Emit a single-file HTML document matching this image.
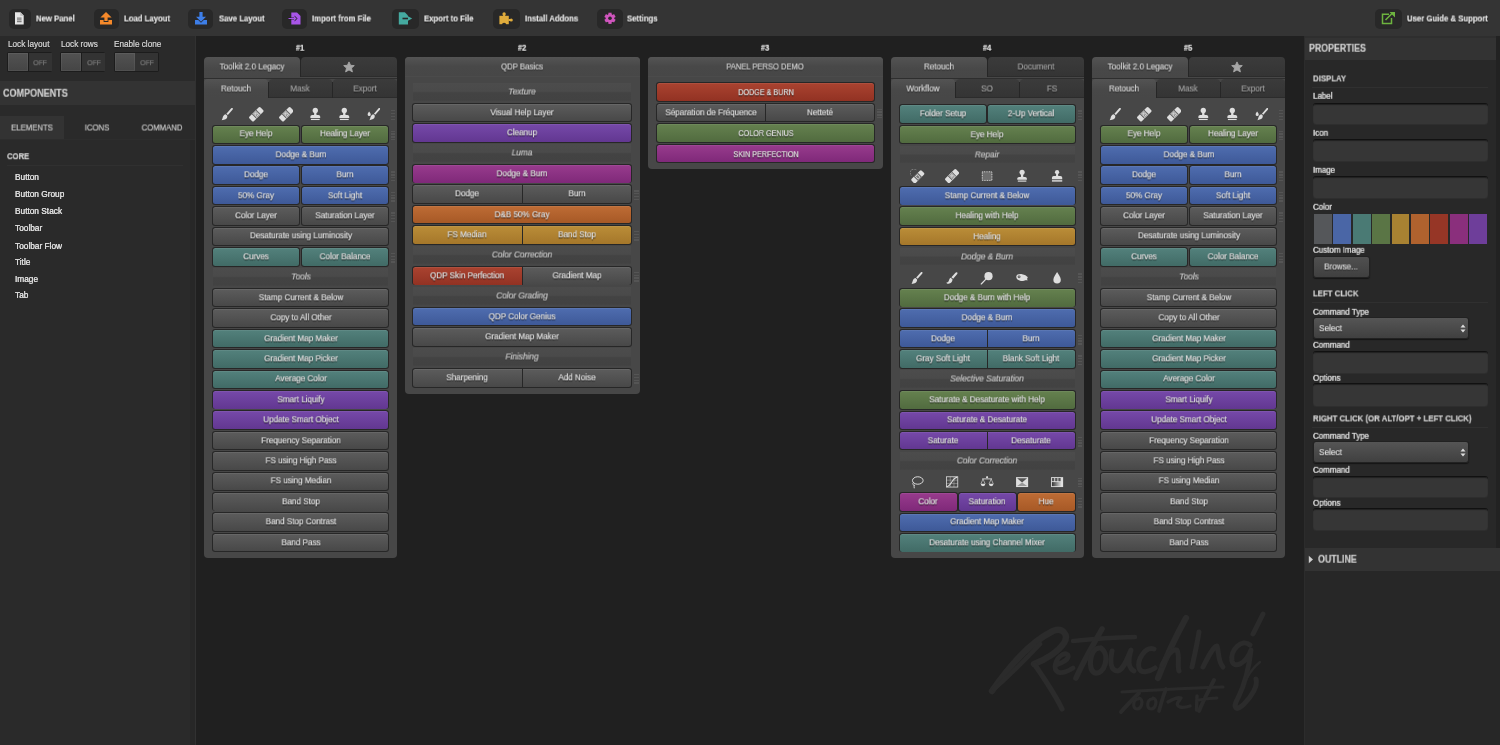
<!DOCTYPE html><html><head><meta charset="utf-8"><style>
*{margin:0;padding:0;box-sizing:border-box}
html,body{width:1500px;height:745px;overflow:hidden;background:#202020;font-family:"Liberation Sans", sans-serif}
.tx{position:absolute;white-space:nowrap;line-height:1;-webkit-text-stroke:0.2px currentColor;will-change:transform}
</style></head><body><div style="position:absolute;left:0px;top:0px;width:1500.00px;height:36.00px;background:#343434"></div>
<div style="position:absolute;left:8.5px;top:8.7px;width:22.00px;height:19.90px;background:#282828;border-radius:5px"></div>
<div class="tx" style="left:35.7px;top:18.6px;font-size:9px;font-weight:bold;color:#e4e4e4;text-shadow:0 1px 1px rgba(0,0,0,.6);transform:translateY(-50%) scaleX(0.86);transform-origin:0 50%;">New Panel</div>
<div style="position:absolute;left:93.5px;top:8.7px;width:25.10px;height:19.90px;background:#282828;border-radius:5px"></div>
<div class="tx" style="left:124px;top:18.6px;font-size:9px;font-weight:bold;color:#e4e4e4;text-shadow:0 1px 1px rgba(0,0,0,.6);transform:translateY(-50%) scaleX(0.86);transform-origin:0 50%;">Load Layout</div>
<div style="position:absolute;left:188.4px;top:8.7px;width:24.40px;height:19.90px;background:#282828;border-radius:5px"></div>
<div class="tx" style="left:218.6px;top:18.6px;font-size:9px;font-weight:bold;color:#e4e4e4;text-shadow:0 1px 1px rgba(0,0,0,.6);transform:translateY(-50%) scaleX(0.86);transform-origin:0 50%;">Save Layout</div>
<div style="position:absolute;left:282px;top:8.7px;width:25.00px;height:19.90px;background:#282828;border-radius:5px"></div>
<div class="tx" style="left:312.4px;top:18.6px;font-size:9px;font-weight:bold;color:#e4e4e4;text-shadow:0 1px 1px rgba(0,0,0,.6);transform:translateY(-50%) scaleX(0.86);transform-origin:0 50%;">Import from File</div>
<div style="position:absolute;left:392.4px;top:8.7px;width:26.60px;height:19.90px;background:#282828;border-radius:5px"></div>
<div class="tx" style="left:424px;top:18.6px;font-size:9px;font-weight:bold;color:#e4e4e4;text-shadow:0 1px 1px rgba(0,0,0,.6);transform:translateY(-50%) scaleX(0.86);transform-origin:0 50%;">Export to File</div>
<div style="position:absolute;left:493px;top:8.7px;width:26.50px;height:19.90px;background:#282828;border-radius:5px"></div>
<div class="tx" style="left:525px;top:18.6px;font-size:9px;font-weight:bold;color:#e4e4e4;text-shadow:0 1px 1px rgba(0,0,0,.6);transform:translateY(-50%) scaleX(0.86);transform-origin:0 50%;">Install Addons</div>
<div style="position:absolute;left:597.2px;top:8.7px;width:25.40px;height:19.90px;background:#282828;border-radius:5px"></div>
<div class="tx" style="left:627.4px;top:18.6px;font-size:9px;font-weight:bold;color:#e4e4e4;text-shadow:0 1px 1px rgba(0,0,0,.6);transform:translateY(-50%) scaleX(0.86);transform-origin:0 50%;">Settings</div>
<div style="position:absolute;left:1375.4px;top:8.7px;width:26.30px;height:19.90px;background:#282828;border-radius:5px"></div>
<div class="tx" style="left:1407px;top:18.6px;font-size:9px;font-weight:bold;color:#e4e4e4;text-shadow:0 1px 1px rgba(0,0,0,.6);transform:translateY(-50%) scaleX(0.86);transform-origin:0 50%;">User Guide &amp; Support</div>
<svg style="position:absolute;left:14px;top:12px;" width="11" height="13" viewBox="0 0 11 13"><path d="M1 0.3 H6.5 L9.7 3.5 V12.4 H1 Z" fill="#e6e6e6"/><path d="M6.3 0.3 V3.7 H9.7" fill="#bbb"/><rect x="3" y="5.6" width="4.6" height="1" fill="#666"/><rect x="3" y="7.4" width="4.6" height="1" fill="#666"/><rect x="3" y="9.2" width="4.6" height="1" fill="#666"/></svg>
<svg style="position:absolute;left:99px;top:11px;" width="14" height="14" viewBox="0 0 14 14"><path d="M7 1 L12.6 6.5 H8.6 V10 H5.4 V6.5 H1.4 Z" fill="#f5892a"/><path d="M1 9 H4.6 V11 H9.4 V9 H13 V13.5 H1 Z" fill="#f5892a"/></svg>
<svg style="position:absolute;left:194px;top:11px;" width="14" height="14" viewBox="0 0 14 14"><path d="M5.4 1 H8.6 V5.8 H12 L7 10.8 L2 5.8 H5.4 Z" fill="#3d7ee8"/><path d="M1 9 H4.2 L7 11.8 L9.8 9 H13 V13.5 H1 Z" fill="#3d7ee8"/></svg>
<svg style="position:absolute;left:288px;top:12px;" width="14" height="13" viewBox="0 0 14 13"><path d="M3.3 0.5 H9 L12.5 4 V12.5 H3.3 Z" fill="#a855e8"/><path d="M0.5 5.6 H6.5 V3.6 L9.6 6.5 L6.5 9.4 V7.4 H0.5 Z" fill="#1e1e1e" opacity="0.9"/><path d="M0.5 5.9 H6 V4.3 L8.6 6.5 L6 8.7 V7.1 H0.5 Z" fill="#a855e8"/></svg>
<svg style="position:absolute;left:398px;top:12px;" width="15" height="13" viewBox="0 0 15 13"><path d="M0.8 0.3 H6.8 L10 3.5 V12.5 H0.8 Z" fill="#45aaa0"/><rect x="4.5" y="5.7" width="6" height="1.6" fill="#282828"/><path d="M10 4.3 L14.2 6.5 L10 8.7 Z" fill="#45aaa0"/></svg>
<svg style="position:absolute;left:499px;top:12px;" width="15" height="13" viewBox="0 0 15 13"><rect x="0.4" y="3.8" width="9.4" height="8.4" fill="#e0ac3c"/><circle cx="5.1" cy="1.9" r="1.7" fill="#e0ac3c"/><rect x="4.1" y="2.5" width="2" height="2" fill="#e0ac3c"/><circle cx="12.2" cy="8" r="1.6" fill="#e0ac3c"/><rect x="9.5" y="7" width="2" height="2" fill="#e0ac3c"/><circle cx="5.1" cy="12.8" r="2.1" fill="#282828"/></svg>
<svg style="position:absolute;left:603.6px;top:12px;" width="12" height="13" viewBox="0 0 12 13"><g fill="#cf55bd" transform="translate(6,6.3)"><rect x="-1.6" y="-5.6" width="3.2" height="3.2" transform="rotate(0)"/><rect x="-1.6" y="-5.6" width="3.2" height="3.2" transform="rotate(60)"/><rect x="-1.6" y="-5.6" width="3.2" height="3.2" transform="rotate(120)"/><rect x="-1.6" y="-5.6" width="3.2" height="3.2" transform="rotate(180)"/><rect x="-1.6" y="-5.6" width="3.2" height="3.2" transform="rotate(240)"/><rect x="-1.6" y="-5.6" width="3.2" height="3.2" transform="rotate(300)"/><circle r="4.2"/></g><circle cx="6" cy="6.3" r="1.8" fill="#282828"/></svg>
<svg style="position:absolute;left:1381px;top:11px;" width="15" height="14" viewBox="0 0 15 14"><path d="M8 3.3 H1.5 V12.5 H10.5 V7" fill="none" stroke="#6db33f" stroke-width="1.5"/><path d="M4.5 9 L12 1.5" stroke="#6db33f" stroke-width="1.6"/><path d="M8.5 1 H14 V6.5 Z" fill="#6db33f"/></svg>
<div style="position:absolute;left:0px;top:36px;width:195.00px;height:709.00px;background:#2a2a2a"></div>
<div style="position:absolute;left:195px;top:36px;width:1.00px;height:709.00px;background:#313131"></div>
<div class="tx" style="left:7.5px;top:44.8px;font-size:8.2px;font-weight:normal;color:#d8d8d8;text-shadow:0 1px 1px rgba(0,0,0,.5);transform:translateY(-50%) scaleX(1.0);transform-origin:0 50%;">Lock layout</div>
<div style="position:absolute;left:7.2px;top:52px;width:45.00px;height:19.80px;background:#1c1c1c;border-radius:2px"></div>
<div style="position:absolute;left:8.1px;top:52.9px;width:20.20px;height:18.20px;background:linear-gradient(#525252,#454545);box-shadow:inset 0 0 0 1px rgba(255,255,255,.06)"></div>
<div style="position:absolute;left:28.5px;top:53px;width:23.30px;height:18.00px;background:#333"></div>
<div class="tx" style="left:40.3px;top:62.6px;font-size:7.6px;font-weight:normal;color:#7a7a7a;transform:translate(-50%,-50%) scaleX(0.9);">OFF</div>
<div class="tx" style="left:60.7px;top:44.8px;font-size:8.2px;font-weight:normal;color:#d8d8d8;text-shadow:0 1px 1px rgba(0,0,0,.5);transform:translateY(-50%) scaleX(1.0);transform-origin:0 50%;">Lock rows</div>
<div style="position:absolute;left:60.400000000000006px;top:52px;width:45.00px;height:19.80px;background:#1c1c1c;border-radius:2px"></div>
<div style="position:absolute;left:61.300000000000004px;top:52.9px;width:20.20px;height:18.20px;background:linear-gradient(#525252,#454545);box-shadow:inset 0 0 0 1px rgba(255,255,255,.06)"></div>
<div style="position:absolute;left:81.7px;top:53px;width:23.30px;height:18.00px;background:#333"></div>
<div class="tx" style="left:93.5px;top:62.6px;font-size:7.6px;font-weight:normal;color:#7a7a7a;transform:translate(-50%,-50%) scaleX(0.9);">OFF</div>
<div class="tx" style="left:114px;top:44.8px;font-size:8.2px;font-weight:normal;color:#d8d8d8;text-shadow:0 1px 1px rgba(0,0,0,.5);transform:translateY(-50%) scaleX(1.0);transform-origin:0 50%;">Enable clone</div>
<div style="position:absolute;left:113.7px;top:52px;width:45.00px;height:19.80px;background:#1c1c1c;border-radius:2px"></div>
<div style="position:absolute;left:114.6px;top:52.9px;width:20.20px;height:18.20px;background:linear-gradient(#525252,#454545);box-shadow:inset 0 0 0 1px rgba(255,255,255,.06)"></div>
<div style="position:absolute;left:135px;top:53px;width:23.30px;height:18.00px;background:#333"></div>
<div class="tx" style="left:146.8px;top:62.6px;font-size:7.6px;font-weight:normal;color:#7a7a7a;transform:translate(-50%,-50%) scaleX(0.9);">OFF</div>
<div style="position:absolute;left:0px;top:81px;width:195.00px;height:23.70px;background:#333"></div>
<div class="tx" style="left:3.3px;top:93px;font-size:10.5px;font-weight:bold;color:#cfcfcf;transform:translateY(-50%) scaleX(0.86);transform-origin:0 50%;">COMPONENTS</div>
<div style="position:absolute;left:0px;top:116px;width:64.00px;height:23.30px;background:#333"></div>
<div class="tx" style="left:32px;top:127.7px;font-size:9px;font-weight:normal;color:#c8c8c8;transform:translate(-50%,-50%) scaleX(0.86);">ELEMENTS</div>
<div class="tx" style="left:97px;top:127.7px;font-size:9px;font-weight:normal;color:#c8c8c8;transform:translate(-50%,-50%) scaleX(0.86);">ICONS</div>
<div class="tx" style="left:162.4px;top:127.7px;font-size:9px;font-weight:normal;color:#c8c8c8;transform:translate(-50%,-50%) scaleX(0.86);">COMMAND</div>
<div style="position:absolute;left:0px;top:139.3px;width:195.00px;height:1.00px;background:#2d2d2d"></div>
<div style="position:absolute;left:190px;top:140.3px;width:5.00px;height:604.70px;background:#272727"></div>
<div class="tx" style="left:7px;top:156.2px;font-size:9.6px;font-weight:bold;color:#d4d4d4;transform:translateY(-50%) scaleX(0.8);transform-origin:0 50%;">CORE</div>
<div style="position:absolute;left:7px;top:165px;width:176.00px;height:1.00px;background:#303030"></div>
<div class="tx" style="left:14.8px;top:177.4px;font-size:8.3px;font-weight:normal;color:#dcdcdc;text-shadow:0 0 0.4px #ddd;transform:translateY(-50%) scaleX(1.0);transform-origin:0 50%;">Button</div>
<div class="tx" style="left:14.8px;top:193.8px;font-size:8.3px;font-weight:normal;color:#dcdcdc;text-shadow:0 0 0.4px #ddd;transform:translateY(-50%) scaleX(1.0);transform-origin:0 50%;">Button Group</div>
<div class="tx" style="left:14.8px;top:211.1px;font-size:8.3px;font-weight:normal;color:#dcdcdc;text-shadow:0 0 0.4px #ddd;transform:translateY(-50%) scaleX(1.0);transform-origin:0 50%;">Button Stack</div>
<div class="tx" style="left:14.8px;top:228.2px;font-size:8.3px;font-weight:normal;color:#dcdcdc;text-shadow:0 0 0.4px #ddd;transform:translateY(-50%) scaleX(1.0);transform-origin:0 50%;">Toolbar</div>
<div class="tx" style="left:14.8px;top:245.6px;font-size:8.3px;font-weight:normal;color:#dcdcdc;text-shadow:0 0 0.4px #ddd;transform:translateY(-50%) scaleX(1.0);transform-origin:0 50%;">Toolbar Flow</div>
<div class="tx" style="left:14.8px;top:261.9px;font-size:8.3px;font-weight:normal;color:#dcdcdc;text-shadow:0 0 0.4px #ddd;transform:translateY(-50%) scaleX(1.0);transform-origin:0 50%;">Title</div>
<div class="tx" style="left:14.8px;top:278.7px;font-size:8.3px;font-weight:normal;color:#dcdcdc;text-shadow:0 0 0.4px #ddd;transform:translateY(-50%) scaleX(1.0);transform-origin:0 50%;">Image</div>
<div class="tx" style="left:14.8px;top:295px;font-size:8.3px;font-weight:normal;color:#dcdcdc;text-shadow:0 0 0.4px #ddd;transform:translateY(-50%) scaleX(1.0);transform-origin:0 50%;">Tab</div>
<div style="position:absolute;left:1304px;top:36px;width:196.00px;height:709.00px;background:#282828"></div>
<div style="position:absolute;left:1304px;top:36px;width:1.30px;height:709.00px;background:#2c2c2c"></div>
<div style="position:absolute;left:1305.3px;top:36px;width:190.70px;height:23.60px;background:#333"></div>
<div style="position:absolute;left:1305.3px;top:36px;width:190.70px;height:1.60px;background:#2e2e2e"></div>
<div class="tx" style="left:1309.0px;top:48px;font-size:10.5px;font-weight:bold;color:#cdcdcd;transform:translateY(-50%) scaleX(0.84);transform-origin:0 50%;">PROPERTIES</div>
<div style="position:absolute;left:1496px;top:36px;width:4.00px;height:511.60px;background:#222"></div>
<div class="tx" style="left:1312.7px;top:79.30000000000001px;font-size:9.2px;font-weight:bold;color:#d0d0d0;transform:translateY(-50%) scaleX(0.85);transform-origin:0 50%;">DISPLAY</div>
<div style="position:absolute;left:1312px;top:87px;width:176.00px;height:1.00px;background:#303030"></div>
<div class="tx" style="left:1312.8px;top:96.4px;font-size:8.4px;font-weight:normal;color:#d8d8d8;text-shadow:0 0 0.4px #ccc;transform:translateY(-50%) scaleX(0.95);transform-origin:0 50%;">Label</div>
<div style="position:absolute;left:1312.5px;top:102.5px;width:175.10px;height:21.50px;background:#363636;border-radius:3px;border-top:1px solid #111;box-shadow:inset 0 1px 1px rgba(0,0,0,.4), 0 1px 0 #2e2e2e"></div>
<div class="tx" style="left:1312.8px;top:133.2px;font-size:8.4px;font-weight:normal;color:#d8d8d8;text-shadow:0 0 0.4px #ccc;transform:translateY(-50%) scaleX(0.95);transform-origin:0 50%;">Icon</div>
<div style="position:absolute;left:1312.5px;top:139.3px;width:175.10px;height:21.50px;background:#363636;border-radius:3px;border-top:1px solid #111;box-shadow:inset 0 1px 1px rgba(0,0,0,.4), 0 1px 0 #2e2e2e"></div>
<div class="tx" style="left:1312.8px;top:170px;font-size:8.4px;font-weight:normal;color:#d8d8d8;text-shadow:0 0 0.4px #ccc;transform:translateY(-50%) scaleX(0.95);transform-origin:0 50%;">Image</div>
<div style="position:absolute;left:1312.5px;top:175.5px;width:175.10px;height:22.00px;background:#363636;border-radius:3px;border-top:1px solid #111;box-shadow:inset 0 1px 1px rgba(0,0,0,.4), 0 1px 0 #2e2e2e"></div>
<div class="tx" style="left:1312.8px;top:207px;font-size:8.4px;font-weight:normal;color:#d8d8d8;text-shadow:0 0 0.4px #ccc;transform:translateY(-50%) scaleX(0.95);transform-origin:0 50%;">Color</div>
<div style="position:absolute;left:1314.0px;top:214.1px;width:17.80px;height:29.60px;background:#55575a"></div>
<div style="position:absolute;left:1333.4px;top:214.1px;width:17.80px;height:29.60px;background:#4a66a6"></div>
<div style="position:absolute;left:1352.8px;top:214.1px;width:17.80px;height:29.60px;background:#4a7a74"></div>
<div style="position:absolute;left:1372.2px;top:214.1px;width:17.80px;height:29.60px;background:#5a7545"></div>
<div style="position:absolute;left:1391.6px;top:214.1px;width:17.80px;height:29.60px;background:#a88232"></div>
<div style="position:absolute;left:1411.0px;top:214.1px;width:17.80px;height:29.60px;background:#b0622e"></div>
<div style="position:absolute;left:1430.4px;top:214.1px;width:17.80px;height:29.60px;background:#963626"></div>
<div style="position:absolute;left:1449.8px;top:214.1px;width:17.80px;height:29.60px;background:#8a2f7c"></div>
<div style="position:absolute;left:1469.2px;top:214.1px;width:17.80px;height:29.60px;background:#6e3e9a"></div>
<div class="tx" style="left:1312.8px;top:250.4px;font-size:8.4px;font-weight:normal;color:#d8d8d8;text-shadow:0 0 0.4px #ccc;transform:translateY(-50%) scaleX(0.95);transform-origin:0 50%;">Custom Image</div>
<div style="position:absolute;left:1313px;top:256.4px;width:56.50px;height:21.60px;background:linear-gradient(#505050,#404040);border-radius:3px;border:1px solid #222;box-shadow:0 1px 1px rgba(0,0,0,.5)"></div>
<div class="tx" style="left:1341.2px;top:267.2px;font-size:9px;font-weight:normal;color:#dcdcdc;text-shadow:0 1px 1px rgba(0,0,0,.6);transform:translate(-50%,-50%) scaleX(0.9);">Browse...</div>
<div class="tx" style="left:1312.7px;top:294.2px;font-size:9.2px;font-weight:bold;color:#d0d0d0;transform:translateY(-50%) scaleX(0.85);transform-origin:0 50%;">LEFT CLICK</div>
<div style="position:absolute;left:1312px;top:302.4px;width:176.00px;height:1.00px;background:#303030"></div>
<div class="tx" style="left:1312.8px;top:311.6px;font-size:8.4px;font-weight:normal;color:#d8d8d8;text-shadow:0 0 0.4px #ccc;transform:translateY(-50%) scaleX(0.95);transform-origin:0 50%;">Command Type</div>
<div style="position:absolute;left:1313px;top:317.09999999999997px;width:155.80px;height:21.90px;background:linear-gradient(#555,#404040);border-radius:3px;border:1px solid #222;box-shadow:0 1px 1px rgba(0,0,0,.5)"></div>
<div class="tx" style="left:1319.3px;top:328.15px;font-size:9.6px;font-weight:normal;color:#e0e0e0;text-shadow:0 1px 1px rgba(0,0,0,.6);transform:translateY(-50%) scaleX(0.86);transform-origin:0 50%;">Select</div>
<svg style="position:absolute;left:1460px;top:323.95px;" width="6" height="9" viewBox="0 0 6 9"><path d="M3 0.5 L5.5 3.6 H0.5 Z M3 8.5 L5.5 5.4 H0.5 Z" fill="#ddd"/></svg>
<div class="tx" style="left:1312.8px;top:345px;font-size:8.4px;font-weight:normal;color:#d8d8d8;text-shadow:0 0 0.4px #ccc;transform:translateY(-50%) scaleX(0.95);transform-origin:0 50%;">Command</div>
<div style="position:absolute;left:1312.5px;top:350.7px;width:175.10px;height:22.20px;background:#363636;border-radius:3px;border-top:1px solid #111;box-shadow:inset 0 1px 1px rgba(0,0,0,.4), 0 1px 0 #2e2e2e"></div>
<div class="tx" style="left:1312.8px;top:378.3px;font-size:8.4px;font-weight:normal;color:#d8d8d8;text-shadow:0 0 0.4px #ccc;transform:translateY(-50%) scaleX(0.95);transform-origin:0 50%;">Options</div>
<div style="position:absolute;left:1312.5px;top:383.3px;width:175.10px;height:22.60px;background:#363636;border-radius:3px;border-top:1px solid #111;box-shadow:inset 0 1px 1px rgba(0,0,0,.4), 0 1px 0 #2e2e2e"></div>
<div class="tx" style="left:1312.7px;top:418.5px;font-size:9.2px;font-weight:bold;color:#d0d0d0;transform:translateY(-50%) scaleX(0.85);transform-origin:0 50%;">RIGHT CLICK (OR ALT/OPT + LEFT CLICK)</div>
<div style="position:absolute;left:1312px;top:426.6px;width:176.00px;height:1.00px;background:#303030"></div>
<div class="tx" style="left:1312.8px;top:436px;font-size:8.4px;font-weight:normal;color:#d8d8d8;text-shadow:0 0 0.4px #ccc;transform:translateY(-50%) scaleX(0.95);transform-origin:0 50%;">Command Type</div>
<div style="position:absolute;left:1313px;top:441.3px;width:155.80px;height:22.00px;background:linear-gradient(#555,#404040);border-radius:3px;border:1px solid #222;box-shadow:0 1px 1px rgba(0,0,0,.5)"></div>
<div class="tx" style="left:1319.3px;top:452.40000000000003px;font-size:9.6px;font-weight:normal;color:#e0e0e0;text-shadow:0 1px 1px rgba(0,0,0,.6);transform:translateY(-50%) scaleX(0.86);transform-origin:0 50%;">Select</div>
<svg style="position:absolute;left:1460px;top:448.20000000000005px;" width="6" height="9" viewBox="0 0 6 9"><path d="M3 0.5 L5.5 3.6 H0.5 Z M3 8.5 L5.5 5.4 H0.5 Z" fill="#ddd"/></svg>
<div class="tx" style="left:1312.8px;top:469.7px;font-size:8.4px;font-weight:normal;color:#d8d8d8;text-shadow:0 0 0.4px #ccc;transform:translateY(-50%) scaleX(0.95);transform-origin:0 50%;">Command</div>
<div style="position:absolute;left:1312.5px;top:475.7px;width:175.10px;height:21.50px;background:#363636;border-radius:3px;border-top:1px solid #111;box-shadow:inset 0 1px 1px rgba(0,0,0,.4), 0 1px 0 #2e2e2e"></div>
<div class="tx" style="left:1312.8px;top:502.9px;font-size:8.4px;font-weight:normal;color:#d8d8d8;text-shadow:0 0 0.4px #ccc;transform:translateY(-50%) scaleX(0.95);transform-origin:0 50%;">Options</div>
<div style="position:absolute;left:1312.5px;top:508.3px;width:175.10px;height:22.20px;background:#363636;border-radius:3px;border-top:1px solid #111;box-shadow:inset 0 1px 1px rgba(0,0,0,.4), 0 1px 0 #2e2e2e"></div>
<div style="position:absolute;left:1305px;top:547.6px;width:195.00px;height:23.10px;background:#333"></div>
<svg style="position:absolute;left:1307.5px;top:555px;" width="6" height="9" viewBox="0 0 6 9"><path d="M0.8 0.8 L5 4.5 L0.8 8.2 Z" fill="#cfcfcf"/></svg>
<div class="tx" style="left:1317.6px;top:559.2px;font-size:10.5px;font-weight:bold;color:#cdcdcd;transform:translateY(-50%) scaleX(0.84);transform-origin:0 50%;">OUTLINE</div>
<div style="position:absolute;left:1305px;top:570.7px;width:195.00px;height:174.30px;background:#272727"></div>
<div style="position:absolute;left:196px;top:36px;width:1108.00px;height:709.00px;background:#202020"></div>
<div class="tx" style="left:299.90000000000003px;top:48px;font-size:8.5px;font-weight:bold;color:#e4e4e4;text-shadow:0 1px 1px rgba(0,0,0,.5);transform:translate(-50%,-50%) scaleX(0.88);">#1</div>
<div style="position:absolute;left:204px;top:66px;width:192.60px;height:491.70px;background:#474747;border-radius:4px"></div>
<div style="position:absolute;left:204px;top:76.5px;width:192.60px;height:2.00px;background:#474747"></div>
<div style="position:absolute;left:207px;top:60px;width:186.60px;height:16.80px;background:#262626"></div>
<div style="position:absolute;left:204.0px;top:57px;width:95.80px;height:19.80px;background:linear-gradient(#535353,#484848 60%,#474747);border-radius:4px 4px 0 0"></div>
<div class="tx" style="left:251.9px;top:67.0px;font-size:9px;font-weight:normal;color:#d8d8d8;text-shadow:0 1px 1px rgba(0,0,0,.6);transform:translate(-50%,-50%) scaleX(0.9);">Toolkit 2.0 Legacy</div>
<div style="position:absolute;left:300.8px;top:57px;width:95.80px;height:19.80px;background:linear-gradient(#3b3b3b,#343434);border-radius:4px 4px 0 0;box-shadow:inset 0 -1px 0 #2c2c2c"></div>
<svg style="position:absolute;left:342.70000000000005px;top:60.900000000000006px;" width="12" height="12" viewBox="0 0 12 12"><path d="M6 0.9 L7.6 4.3 L11.3 4.6 L8.5 7.1 L9.4 10.9 L6 8.9 L2.6 10.9 L3.5 7.1 L0.7 4.6 L4.4 4.3 Z" fill="#a6a6a6" stroke="#a6a6a6" stroke-width="0.9" stroke-linejoin="round"/></svg>
<div style="position:absolute;left:204px;top:77.9px;width:192.60px;height:0.70px;background:#2e2e2e"></div>
<div style="position:absolute;left:207px;top:81.6px;width:186.60px;height:16.90px;background:#262626"></div>
<div style="position:absolute;left:204.0px;top:78.6px;width:63.70px;height:19.90px;background:linear-gradient(#535353,#484848 60%,#474747);border-radius:4px 4px 0 0"></div>
<div class="tx" style="left:235.85px;top:88.64999999999999px;font-size:9px;font-weight:normal;color:#d8d8d8;text-shadow:0 1px 1px rgba(0,0,0,.6);transform:translate(-50%,-50%) scaleX(0.9);">Retouch</div>
<div style="position:absolute;left:268.7px;top:78.6px;width:63.20px;height:19.90px;background:linear-gradient(#3b3b3b,#343434);border-radius:4px 4px 0 0;box-shadow:inset 0 -1px 0 #2c2c2c"></div>
<div class="tx" style="left:300.29999999999995px;top:88.64999999999999px;font-size:9px;font-weight:normal;color:#a0a0a0;text-shadow:0 1px 1px rgba(0,0,0,.6);transform:translate(-50%,-50%) scaleX(0.9);">Mask</div>
<div style="position:absolute;left:332.9px;top:78.6px;width:63.70px;height:19.90px;background:linear-gradient(#3b3b3b,#343434);border-radius:4px 4px 0 0;box-shadow:inset 0 -1px 0 #2c2c2c"></div>
<div class="tx" style="left:364.75px;top:88.64999999999999px;font-size:9px;font-weight:normal;color:#a0a0a0;text-shadow:0 1px 1px rgba(0,0,0,.6);transform:translate(-50%,-50%) scaleX(0.9);">Export</div>
<svg style="position:absolute;left:220.0333333333333px;top:107.2px;" width="14.6" height="14.6" viewBox="0 0 16 16"><path d="M13.6 1.2 C14.3 1.6 14.2 2.4 13.7 3 L8.6 8.8 L7.0 7.4 L12.3 1.5 C12.7 1.1 13.2 1.0 13.6 1.2 Z" fill="#dedede"/><path d="M6.3 8.0 L8.0 9.5 C8.3 11.6 6.9 13.6 4.4 14.0 L1.8 14.6 C2.8 13.2 2.8 11.6 3.6 10.0 C4.2 8.9 5.2 8.2 6.3 8.0 Z" fill="#dedede"/></svg>
<svg style="position:absolute;left:249.3px;top:107.2px;" width="14.6" height="14.6" viewBox="0 0 16 16"><g transform="rotate(-45 8 8)"><rect x="-0.6" y="4.5" width="17.2" height="7" rx="1.6" fill="#dedede"/><rect x="4.6" y="4.5" width="0.7" height="7" fill="#474747"/><rect x="10.7" y="4.5" width="0.7" height="7" fill="#474747"/><rect x="5.9" y="5.5" width="4.2" height="5" fill="none" stroke="#5e5e5e" stroke-width="0.6"/><circle cx="7.1" cy="6.9" r="0.45" fill="#555"/><circle cx="8.9" cy="6.9" r="0.45" fill="#555"/><circle cx="7.1" cy="9.1" r="0.45" fill="#555"/><circle cx="8.9" cy="9.1" r="0.45" fill="#555"/><circle cx="8" cy="8" r="0.45" fill="#555"/></g></svg>
<svg style="position:absolute;left:278.56666666666666px;top:107.2px;" width="14.6" height="14.6" viewBox="0 0 16 16"><g transform="rotate(-45 8 8)"><rect x="-0.6" y="4.5" width="17.2" height="7" rx="1.6" fill="#dedede"/><rect x="4.6" y="4.5" width="0.7" height="7" fill="#474747"/><rect x="10.7" y="4.5" width="0.7" height="7" fill="#474747"/><rect x="5.9" y="5.5" width="4.2" height="5" fill="none" stroke="#5e5e5e" stroke-width="0.6"/><circle cx="7.1" cy="6.9" r="0.45" fill="#555"/><circle cx="8.9" cy="6.9" r="0.45" fill="#555"/><circle cx="7.1" cy="9.1" r="0.45" fill="#555"/><circle cx="8.9" cy="9.1" r="0.45" fill="#555"/><circle cx="8" cy="8" r="0.45" fill="#555"/></g></svg>
<svg style="position:absolute;left:307.8333333333333px;top:107.2px;" width="14.6" height="14.6" viewBox="0 0 16 16"><circle cx="8" cy="3.8" r="2.9" fill="#dedede"/><path d="M6.9 5.5 H9.1 L9.4 9.0 H6.6 Z" fill="#dedede"/><path d="M2.6 10.6 Q2.6 8.9 4.6 8.9 H11.4 Q13.4 8.9 13.4 10.6 V12 H2.6 Z" fill="#dedede"/><rect x="3.2" y="13" width="9.6" height="1.3" fill="#dedede"/></svg>
<svg style="position:absolute;left:337.09999999999997px;top:107.2px;" width="14.6" height="14.6" viewBox="0 0 16 16"><circle cx="8" cy="3.8" r="2.9" fill="#dedede"/><path d="M6.9 5.5 H9.1 L9.4 9.0 H6.6 Z" fill="#dedede"/><path d="M2.6 10.6 Q2.6 8.9 4.6 8.9 H11.4 Q13.4 8.9 13.4 10.6 V12 H2.6 Z" fill="#dedede"/><rect x="3.2" y="13" width="9.6" height="1.3" fill="#dedede"/></svg>
<svg style="position:absolute;left:366.3666666666666px;top:107.2px;" width="14.6" height="14.6" viewBox="0 0 16 16"><path d="M3.4 5.0 C2.6 6.2 1.8 7.2 1.8 8.2 A1.7 1.7 0 0 0 5.2 8.2 C5.2 7.2 4.2 6.2 3.4 5.0 Z" fill="#dedede"/><path d="M15.0 1.2 C15.6 1.6 15.5 2.3 15.1 2.9 L10.2 8.6 L8.7 7.3 L13.8 1.5 C14.2 1.1 14.6 1.0 15.0 1.2 Z" fill="#dedede"/><path d="M8.0 7.9 L9.6 9.3 C9.9 11.4 8.6 13.4 6.2 13.8 L3.8 14.4 C4.7 13.0 4.7 11.5 5.5 10.0 C6.0 8.9 7.0 8.2 8.0 7.9 Z" fill="#dedede"/></svg>
<div style="position:absolute;left:390.6px;top:110.1px;width:4.50px;height:1.40px;background:#555"></div>
<div style="position:absolute;left:390.6px;top:112.89999999999999px;width:4.50px;height:1.40px;background:#555"></div>
<div style="position:absolute;left:390.6px;top:115.69999999999999px;width:4.50px;height:1.40px;background:#555"></div>
<div style="position:absolute;left:390.6px;top:118.5px;width:4.50px;height:1.40px;background:#555"></div>
<div style="position:absolute;left:211.7px;top:124.66px;width:88.80px;height:19.45px;background:#272727;border-radius:3.2px"></div>
<div style="position:absolute;left:212.7px;top:125.66px;width:86.80px;height:17.55px;background:linear-gradient(#65814f,#516b3f);border-radius:2.5px 2.5px 2.5px 2.5px;box-shadow:inset 0 1px 0 rgba(255,255,255,.07)"></div>
<div class="tx" style="left:256.1px;top:134.435px;font-size:9.3px;font-weight:normal;color:#e2e2e2;text-shadow:0 1px 1px rgba(0,0,0,.85);transform:translate(-50%,-50%) scaleX(0.87);">Eye Help</div>
<div style="position:absolute;left:300.5px;top:124.66px;width:88.80px;height:19.45px;background:#272727;border-radius:3.2px"></div>
<div style="position:absolute;left:301.5px;top:125.66px;width:86.80px;height:17.55px;background:linear-gradient(#65814f,#516b3f);border-radius:2.5px 2.5px 2.5px 2.5px;box-shadow:inset 0 1px 0 rgba(255,255,255,.07)"></div>
<div class="tx" style="left:344.9px;top:134.435px;font-size:9.3px;font-weight:normal;color:#e2e2e2;text-shadow:0 1px 1px rgba(0,0,0,.85);transform:translate(-50%,-50%) scaleX(0.87);">Healing Layer</div>
<div style="position:absolute;left:390.6px;top:130.51px;width:4.50px;height:1.40px;background:#555"></div>
<div style="position:absolute;left:390.6px;top:133.31px;width:4.50px;height:1.40px;background:#555"></div>
<div style="position:absolute;left:390.6px;top:136.10999999999999px;width:4.50px;height:1.40px;background:#555"></div>
<div style="position:absolute;left:390.6px;top:138.91px;width:4.50px;height:1.40px;background:#555"></div>
<div style="position:absolute;left:211.7px;top:145.07px;width:177.60px;height:19.45px;background:#272727;border-radius:3.2px"></div>
<div style="position:absolute;left:212.7px;top:146.07px;width:175.60px;height:17.55px;background:linear-gradient(#4f6daf,#3e5998);border-radius:2.5px 2.5px 2.5px 2.5px;box-shadow:inset 0 1px 0 rgba(255,255,255,.07)"></div>
<div class="tx" style="left:300.5px;top:154.845px;font-size:9.3px;font-weight:normal;color:#e2e2e2;text-shadow:0 1px 1px rgba(0,0,0,.85);transform:translate(-50%,-50%) scaleX(0.87);">Dodge &amp; Burn</div>
<div style="position:absolute;left:211.7px;top:165.48000000000002px;width:88.80px;height:19.45px;background:#272727;border-radius:3.2px"></div>
<div style="position:absolute;left:212.7px;top:166.48000000000002px;width:86.80px;height:17.55px;background:linear-gradient(#4f6daf,#3e5998);border-radius:2.5px 2.5px 2.5px 2.5px;box-shadow:inset 0 1px 0 rgba(255,255,255,.07)"></div>
<div class="tx" style="left:256.1px;top:175.25500000000002px;font-size:9.3px;font-weight:normal;color:#e2e2e2;text-shadow:0 1px 1px rgba(0,0,0,.85);transform:translate(-50%,-50%) scaleX(0.87);">Dodge</div>
<div style="position:absolute;left:300.5px;top:165.48000000000002px;width:88.80px;height:19.45px;background:#272727;border-radius:3.2px"></div>
<div style="position:absolute;left:301.5px;top:166.48000000000002px;width:86.80px;height:17.55px;background:linear-gradient(#4f6daf,#3e5998);border-radius:2.5px 2.5px 2.5px 2.5px;box-shadow:inset 0 1px 0 rgba(255,255,255,.07)"></div>
<div class="tx" style="left:344.9px;top:175.25500000000002px;font-size:9.3px;font-weight:normal;color:#e2e2e2;text-shadow:0 1px 1px rgba(0,0,0,.85);transform:translate(-50%,-50%) scaleX(0.87);">Burn</div>
<div style="position:absolute;left:390.6px;top:171.33px;width:4.50px;height:1.40px;background:#555"></div>
<div style="position:absolute;left:390.6px;top:174.13000000000002px;width:4.50px;height:1.40px;background:#555"></div>
<div style="position:absolute;left:390.6px;top:176.93px;width:4.50px;height:1.40px;background:#555"></div>
<div style="position:absolute;left:390.6px;top:179.73000000000002px;width:4.50px;height:1.40px;background:#555"></div>
<div style="position:absolute;left:211.7px;top:185.89px;width:88.80px;height:19.45px;background:#272727;border-radius:3.2px"></div>
<div style="position:absolute;left:212.7px;top:186.89px;width:86.80px;height:17.55px;background:linear-gradient(#4f6daf,#3e5998);border-radius:2.5px 2.5px 2.5px 2.5px;box-shadow:inset 0 1px 0 rgba(255,255,255,.07)"></div>
<div class="tx" style="left:256.1px;top:195.665px;font-size:9.3px;font-weight:normal;color:#e2e2e2;text-shadow:0 1px 1px rgba(0,0,0,.85);transform:translate(-50%,-50%) scaleX(0.87);">50% Gray</div>
<div style="position:absolute;left:300.5px;top:185.89px;width:88.80px;height:19.45px;background:#272727;border-radius:3.2px"></div>
<div style="position:absolute;left:301.5px;top:186.89px;width:86.80px;height:17.55px;background:linear-gradient(#4f6daf,#3e5998);border-radius:2.5px 2.5px 2.5px 2.5px;box-shadow:inset 0 1px 0 rgba(255,255,255,.07)"></div>
<div class="tx" style="left:344.9px;top:195.665px;font-size:9.3px;font-weight:normal;color:#e2e2e2;text-shadow:0 1px 1px rgba(0,0,0,.85);transform:translate(-50%,-50%) scaleX(0.87);">Soft Light</div>
<div style="position:absolute;left:390.6px;top:191.73999999999998px;width:4.50px;height:1.40px;background:#555"></div>
<div style="position:absolute;left:390.6px;top:194.54px;width:4.50px;height:1.40px;background:#555"></div>
<div style="position:absolute;left:390.6px;top:197.33999999999997px;width:4.50px;height:1.40px;background:#555"></div>
<div style="position:absolute;left:390.6px;top:200.14px;width:4.50px;height:1.40px;background:#555"></div>
<div style="position:absolute;left:211.7px;top:206.3px;width:88.80px;height:19.45px;background:#272727;border-radius:3.2px"></div>
<div style="position:absolute;left:212.7px;top:207.3px;width:86.80px;height:17.55px;background:linear-gradient(#5c5c5c,#484848);border-radius:2.5px 2.5px 2.5px 2.5px;box-shadow:inset 0 1px 0 rgba(255,255,255,.07)"></div>
<div class="tx" style="left:256.1px;top:216.07500000000002px;font-size:9.3px;font-weight:normal;color:#e2e2e2;text-shadow:0 1px 1px rgba(0,0,0,.85);transform:translate(-50%,-50%) scaleX(0.87);">Color Layer</div>
<div style="position:absolute;left:300.5px;top:206.3px;width:88.80px;height:19.45px;background:#272727;border-radius:3.2px"></div>
<div style="position:absolute;left:301.5px;top:207.3px;width:86.80px;height:17.55px;background:linear-gradient(#5c5c5c,#484848);border-radius:2.5px 2.5px 2.5px 2.5px;box-shadow:inset 0 1px 0 rgba(255,255,255,.07)"></div>
<div class="tx" style="left:344.9px;top:216.07500000000002px;font-size:9.3px;font-weight:normal;color:#e2e2e2;text-shadow:0 1px 1px rgba(0,0,0,.85);transform:translate(-50%,-50%) scaleX(0.87);">Saturation Layer</div>
<div style="position:absolute;left:390.6px;top:212.15px;width:4.50px;height:1.40px;background:#555"></div>
<div style="position:absolute;left:390.6px;top:214.95000000000002px;width:4.50px;height:1.40px;background:#555"></div>
<div style="position:absolute;left:390.6px;top:217.75px;width:4.50px;height:1.40px;background:#555"></div>
<div style="position:absolute;left:390.6px;top:220.55px;width:4.50px;height:1.40px;background:#555"></div>
<div style="position:absolute;left:211.7px;top:226.71px;width:177.60px;height:19.45px;background:#272727;border-radius:3.2px"></div>
<div style="position:absolute;left:212.7px;top:227.71px;width:175.60px;height:17.55px;background:linear-gradient(#5c5c5c,#484848);border-radius:2.5px 2.5px 2.5px 2.5px;box-shadow:inset 0 1px 0 rgba(255,255,255,.07)"></div>
<div class="tx" style="left:300.5px;top:236.485px;font-size:9.3px;font-weight:normal;color:#e2e2e2;text-shadow:0 1px 1px rgba(0,0,0,.85);transform:translate(-50%,-50%) scaleX(0.87);">Desaturate using Luminosity</div>
<div style="position:absolute;left:211.7px;top:247.12px;width:88.80px;height:19.45px;background:#272727;border-radius:3.2px"></div>
<div style="position:absolute;left:212.7px;top:248.12px;width:86.80px;height:17.55px;background:linear-gradient(#53817c,#416b66);border-radius:2.5px 2.5px 2.5px 2.5px;box-shadow:inset 0 1px 0 rgba(255,255,255,.07)"></div>
<div class="tx" style="left:256.1px;top:256.895px;font-size:9.3px;font-weight:normal;color:#e2e2e2;text-shadow:0 1px 1px rgba(0,0,0,.85);transform:translate(-50%,-50%) scaleX(0.87);">Curves</div>
<div style="position:absolute;left:300.5px;top:247.12px;width:88.80px;height:19.45px;background:#272727;border-radius:3.2px"></div>
<div style="position:absolute;left:301.5px;top:248.12px;width:86.80px;height:17.55px;background:linear-gradient(#53817c,#416b66);border-radius:2.5px 2.5px 2.5px 2.5px;box-shadow:inset 0 1px 0 rgba(255,255,255,.07)"></div>
<div class="tx" style="left:344.9px;top:256.895px;font-size:9.3px;font-weight:normal;color:#e2e2e2;text-shadow:0 1px 1px rgba(0,0,0,.85);transform:translate(-50%,-50%) scaleX(0.87);">Color Balance</div>
<div style="position:absolute;left:390.6px;top:252.97px;width:4.50px;height:1.40px;background:#555"></div>
<div style="position:absolute;left:390.6px;top:255.77px;width:4.50px;height:1.40px;background:#555"></div>
<div style="position:absolute;left:390.6px;top:258.57px;width:4.50px;height:1.40px;background:#555"></div>
<div style="position:absolute;left:390.6px;top:261.37px;width:4.50px;height:1.40px;background:#555"></div>
<div style="position:absolute;left:212.7px;top:267.88px;width:175.60px;height:17.90px;background:linear-gradient(#4c4c4c 0%,#4a4a4a 46%,#434343 54%,#424242 94%,#454545 100%)"></div>
<div class="tx" style="left:300.5px;top:277.22999999999996px;font-size:9px;font-weight:normal;color:#c8c8c8;font-style:italic;text-shadow:0 1px 0.5px rgba(0,0,0,.25);transform:translate(-50%,-50%) scaleX(0.92);">Tools</div>
<div style="position:absolute;left:211.7px;top:287.94px;width:177.60px;height:19.45px;background:#272727;border-radius:3.2px"></div>
<div style="position:absolute;left:212.7px;top:288.94px;width:175.60px;height:17.55px;background:linear-gradient(#5c5c5c,#484848);border-radius:2.5px 2.5px 2.5px 2.5px;box-shadow:inset 0 1px 0 rgba(255,255,255,.07)"></div>
<div class="tx" style="left:300.5px;top:297.71500000000003px;font-size:9.3px;font-weight:normal;color:#e2e2e2;text-shadow:0 1px 1px rgba(0,0,0,.85);transform:translate(-50%,-50%) scaleX(0.87);">Stamp Current &amp; Below</div>
<div style="position:absolute;left:211.7px;top:308.35px;width:177.60px;height:19.45px;background:#272727;border-radius:3.2px"></div>
<div style="position:absolute;left:212.7px;top:309.35px;width:175.60px;height:17.55px;background:linear-gradient(#5c5c5c,#484848);border-radius:2.5px 2.5px 2.5px 2.5px;box-shadow:inset 0 1px 0 rgba(255,255,255,.07)"></div>
<div class="tx" style="left:300.5px;top:318.125px;font-size:9.3px;font-weight:normal;color:#e2e2e2;text-shadow:0 1px 1px rgba(0,0,0,.85);transform:translate(-50%,-50%) scaleX(0.87);">Copy to All Other</div>
<div style="position:absolute;left:211.7px;top:328.76px;width:177.60px;height:19.45px;background:#272727;border-radius:3.2px"></div>
<div style="position:absolute;left:212.7px;top:329.76px;width:175.60px;height:17.55px;background:linear-gradient(#53817c,#416b66);border-radius:2.5px 2.5px 2.5px 2.5px;box-shadow:inset 0 1px 0 rgba(255,255,255,.07)"></div>
<div class="tx" style="left:300.5px;top:338.53499999999997px;font-size:9.3px;font-weight:normal;color:#e2e2e2;text-shadow:0 1px 1px rgba(0,0,0,.85);transform:translate(-50%,-50%) scaleX(0.87);">Gradient Map Maker</div>
<div style="position:absolute;left:211.7px;top:349.17px;width:177.60px;height:19.45px;background:#272727;border-radius:3.2px"></div>
<div style="position:absolute;left:212.7px;top:350.17px;width:175.60px;height:17.55px;background:linear-gradient(#53817c,#416b66);border-radius:2.5px 2.5px 2.5px 2.5px;box-shadow:inset 0 1px 0 rgba(255,255,255,.07)"></div>
<div class="tx" style="left:300.5px;top:358.94500000000005px;font-size:9.3px;font-weight:normal;color:#e2e2e2;text-shadow:0 1px 1px rgba(0,0,0,.85);transform:translate(-50%,-50%) scaleX(0.87);">Gradient Map Picker</div>
<div style="position:absolute;left:211.7px;top:369.58px;width:177.60px;height:19.45px;background:#272727;border-radius:3.2px"></div>
<div style="position:absolute;left:212.7px;top:370.58px;width:175.60px;height:17.55px;background:linear-gradient(#53817c,#416b66);border-radius:2.5px 2.5px 2.5px 2.5px;box-shadow:inset 0 1px 0 rgba(255,255,255,.07)"></div>
<div class="tx" style="left:300.5px;top:379.355px;font-size:9.3px;font-weight:normal;color:#e2e2e2;text-shadow:0 1px 1px rgba(0,0,0,.85);transform:translate(-50%,-50%) scaleX(0.87);">Average Color</div>
<div style="position:absolute;left:211.7px;top:389.99px;width:177.60px;height:19.45px;background:#272727;border-radius:3.2px"></div>
<div style="position:absolute;left:212.7px;top:390.99px;width:175.60px;height:17.55px;background:linear-gradient(#7649a9,#623791);border-radius:2.5px 2.5px 2.5px 2.5px;box-shadow:inset 0 1px 0 rgba(255,255,255,.07)"></div>
<div class="tx" style="left:300.5px;top:399.765px;font-size:9.3px;font-weight:normal;color:#e2e2e2;text-shadow:0 1px 1px rgba(0,0,0,.85);transform:translate(-50%,-50%) scaleX(0.87);">Smart Liquify</div>
<div style="position:absolute;left:211.7px;top:410.4px;width:177.60px;height:19.45px;background:#272727;border-radius:3.2px"></div>
<div style="position:absolute;left:212.7px;top:411.4px;width:175.60px;height:17.55px;background:linear-gradient(#7649a9,#623791);border-radius:2.5px 2.5px 2.5px 2.5px;box-shadow:inset 0 1px 0 rgba(255,255,255,.07)"></div>
<div class="tx" style="left:300.5px;top:420.17499999999995px;font-size:9.3px;font-weight:normal;color:#e2e2e2;text-shadow:0 1px 1px rgba(0,0,0,.85);transform:translate(-50%,-50%) scaleX(0.87);">Update Smart Object</div>
<div style="position:absolute;left:211.7px;top:430.81px;width:177.60px;height:19.45px;background:#272727;border-radius:3.2px"></div>
<div style="position:absolute;left:212.7px;top:431.81px;width:175.60px;height:17.55px;background:linear-gradient(#5c5c5c,#484848);border-radius:2.5px 2.5px 2.5px 2.5px;box-shadow:inset 0 1px 0 rgba(255,255,255,.07)"></div>
<div class="tx" style="left:300.5px;top:440.58500000000004px;font-size:9.3px;font-weight:normal;color:#e2e2e2;text-shadow:0 1px 1px rgba(0,0,0,.85);transform:translate(-50%,-50%) scaleX(0.87);">Frequency Separation</div>
<div style="position:absolute;left:211.7px;top:451.22px;width:177.60px;height:19.45px;background:#272727;border-radius:3.2px"></div>
<div style="position:absolute;left:212.7px;top:452.22px;width:175.60px;height:17.55px;background:linear-gradient(#5c5c5c,#484848);border-radius:2.5px 2.5px 2.5px 2.5px;box-shadow:inset 0 1px 0 rgba(255,255,255,.07)"></div>
<div class="tx" style="left:300.5px;top:460.995px;font-size:9.3px;font-weight:normal;color:#e2e2e2;text-shadow:0 1px 1px rgba(0,0,0,.85);transform:translate(-50%,-50%) scaleX(0.87);">FS using High Pass</div>
<div style="position:absolute;left:211.7px;top:471.63px;width:177.60px;height:19.45px;background:#272727;border-radius:3.2px"></div>
<div style="position:absolute;left:212.7px;top:472.63px;width:175.60px;height:17.55px;background:linear-gradient(#5c5c5c,#484848);border-radius:2.5px 2.5px 2.5px 2.5px;box-shadow:inset 0 1px 0 rgba(255,255,255,.07)"></div>
<div class="tx" style="left:300.5px;top:481.405px;font-size:9.3px;font-weight:normal;color:#e2e2e2;text-shadow:0 1px 1px rgba(0,0,0,.85);transform:translate(-50%,-50%) scaleX(0.87);">FS using Median</div>
<div style="position:absolute;left:211.7px;top:492.04px;width:177.60px;height:19.45px;background:#272727;border-radius:3.2px"></div>
<div style="position:absolute;left:212.7px;top:493.04px;width:175.60px;height:17.55px;background:linear-gradient(#5c5c5c,#484848);border-radius:2.5px 2.5px 2.5px 2.5px;box-shadow:inset 0 1px 0 rgba(255,255,255,.07)"></div>
<div class="tx" style="left:300.5px;top:501.81500000000005px;font-size:9.3px;font-weight:normal;color:#e2e2e2;text-shadow:0 1px 1px rgba(0,0,0,.85);transform:translate(-50%,-50%) scaleX(0.87);">Band Stop</div>
<div style="position:absolute;left:211.7px;top:512.45px;width:177.60px;height:19.45px;background:#272727;border-radius:3.2px"></div>
<div style="position:absolute;left:212.7px;top:513.45px;width:175.60px;height:17.55px;background:linear-gradient(#5c5c5c,#484848);border-radius:2.5px 2.5px 2.5px 2.5px;box-shadow:inset 0 1px 0 rgba(255,255,255,.07)"></div>
<div class="tx" style="left:300.5px;top:522.225px;font-size:9.3px;font-weight:normal;color:#e2e2e2;text-shadow:0 1px 1px rgba(0,0,0,.85);transform:translate(-50%,-50%) scaleX(0.87);">Band Stop Contrast</div>
<div style="position:absolute;left:211.7px;top:532.86px;width:177.60px;height:19.45px;background:#272727;border-radius:3.2px"></div>
<div style="position:absolute;left:212.7px;top:533.86px;width:175.60px;height:17.55px;background:linear-gradient(#5c5c5c,#484848);border-radius:2.5px 2.5px 2.5px 2.5px;box-shadow:inset 0 1px 0 rgba(255,255,255,.07)"></div>
<div class="tx" style="left:300.5px;top:542.635px;font-size:9.3px;font-weight:normal;color:#e2e2e2;text-shadow:0 1px 1px rgba(0,0,0,.85);transform:translate(-50%,-50%) scaleX(0.87);">Band Pass</div>
<div class="tx" style="left:1187.8999999999999px;top:48px;font-size:8.5px;font-weight:bold;color:#e4e4e4;text-shadow:0 1px 1px rgba(0,0,0,.5);transform:translate(-50%,-50%) scaleX(0.88);">#5</div>
<div style="position:absolute;left:1092px;top:66px;width:192.60px;height:491.70px;background:#474747;border-radius:4px"></div>
<div style="position:absolute;left:1092px;top:76.5px;width:192.60px;height:2.00px;background:#474747"></div>
<div style="position:absolute;left:1095px;top:60px;width:186.60px;height:16.80px;background:#262626"></div>
<div style="position:absolute;left:1092.0px;top:57px;width:95.80px;height:19.80px;background:linear-gradient(#535353,#484848 60%,#474747);border-radius:4px 4px 0 0"></div>
<div class="tx" style="left:1139.9px;top:67.0px;font-size:9px;font-weight:normal;color:#d8d8d8;text-shadow:0 1px 1px rgba(0,0,0,.6);transform:translate(-50%,-50%) scaleX(0.9);">Toolkit 2.0 Legacy</div>
<div style="position:absolute;left:1188.8px;top:57px;width:95.80px;height:19.80px;background:linear-gradient(#3b3b3b,#343434);border-radius:4px 4px 0 0;box-shadow:inset 0 -1px 0 #2c2c2c"></div>
<svg style="position:absolute;left:1230.6999999999998px;top:60.900000000000006px;" width="12" height="12" viewBox="0 0 12 12"><path d="M6 0.9 L7.6 4.3 L11.3 4.6 L8.5 7.1 L9.4 10.9 L6 8.9 L2.6 10.9 L3.5 7.1 L0.7 4.6 L4.4 4.3 Z" fill="#a6a6a6" stroke="#a6a6a6" stroke-width="0.9" stroke-linejoin="round"/></svg>
<div style="position:absolute;left:1092px;top:77.9px;width:192.60px;height:0.70px;background:#2e2e2e"></div>
<div style="position:absolute;left:1095px;top:81.6px;width:186.60px;height:16.90px;background:#262626"></div>
<div style="position:absolute;left:1092.0px;top:78.6px;width:63.70px;height:19.90px;background:linear-gradient(#535353,#484848 60%,#474747);border-radius:4px 4px 0 0"></div>
<div class="tx" style="left:1123.85px;top:88.64999999999999px;font-size:9px;font-weight:normal;color:#d8d8d8;text-shadow:0 1px 1px rgba(0,0,0,.6);transform:translate(-50%,-50%) scaleX(0.9);">Retouch</div>
<div style="position:absolute;left:1156.7px;top:78.6px;width:63.20px;height:19.90px;background:linear-gradient(#3b3b3b,#343434);border-radius:4px 4px 0 0;box-shadow:inset 0 -1px 0 #2c2c2c"></div>
<div class="tx" style="left:1188.3px;top:88.64999999999999px;font-size:9px;font-weight:normal;color:#a0a0a0;text-shadow:0 1px 1px rgba(0,0,0,.6);transform:translate(-50%,-50%) scaleX(0.9);">Mask</div>
<div style="position:absolute;left:1220.8999999999999px;top:78.6px;width:63.70px;height:19.90px;background:linear-gradient(#3b3b3b,#343434);border-radius:4px 4px 0 0;box-shadow:inset 0 -1px 0 #2c2c2c"></div>
<div class="tx" style="left:1252.75px;top:88.64999999999999px;font-size:9px;font-weight:normal;color:#a0a0a0;text-shadow:0 1px 1px rgba(0,0,0,.6);transform:translate(-50%,-50%) scaleX(0.9);">Export</div>
<svg style="position:absolute;left:1108.0333333333335px;top:107.2px;" width="14.6" height="14.6" viewBox="0 0 16 16"><path d="M13.6 1.2 C14.3 1.6 14.2 2.4 13.7 3 L8.6 8.8 L7.0 7.4 L12.3 1.5 C12.7 1.1 13.2 1.0 13.6 1.2 Z" fill="#dedede"/><path d="M6.3 8.0 L8.0 9.5 C8.3 11.6 6.9 13.6 4.4 14.0 L1.8 14.6 C2.8 13.2 2.8 11.6 3.6 10.0 C4.2 8.9 5.2 8.2 6.3 8.0 Z" fill="#dedede"/></svg>
<svg style="position:absolute;left:1137.3px;top:107.2px;" width="14.6" height="14.6" viewBox="0 0 16 16"><g transform="rotate(-45 8 8)"><rect x="-0.6" y="4.5" width="17.2" height="7" rx="1.6" fill="#dedede"/><rect x="4.6" y="4.5" width="0.7" height="7" fill="#474747"/><rect x="10.7" y="4.5" width="0.7" height="7" fill="#474747"/><rect x="5.9" y="5.5" width="4.2" height="5" fill="none" stroke="#5e5e5e" stroke-width="0.6"/><circle cx="7.1" cy="6.9" r="0.45" fill="#555"/><circle cx="8.9" cy="6.9" r="0.45" fill="#555"/><circle cx="7.1" cy="9.1" r="0.45" fill="#555"/><circle cx="8.9" cy="9.1" r="0.45" fill="#555"/><circle cx="8" cy="8" r="0.45" fill="#555"/></g></svg>
<svg style="position:absolute;left:1166.5666666666668px;top:107.2px;" width="14.6" height="14.6" viewBox="0 0 16 16"><g transform="rotate(-45 8 8)"><rect x="-0.6" y="4.5" width="17.2" height="7" rx="1.6" fill="#dedede"/><rect x="4.6" y="4.5" width="0.7" height="7" fill="#474747"/><rect x="10.7" y="4.5" width="0.7" height="7" fill="#474747"/><rect x="5.9" y="5.5" width="4.2" height="5" fill="none" stroke="#5e5e5e" stroke-width="0.6"/><circle cx="7.1" cy="6.9" r="0.45" fill="#555"/><circle cx="8.9" cy="6.9" r="0.45" fill="#555"/><circle cx="7.1" cy="9.1" r="0.45" fill="#555"/><circle cx="8.9" cy="9.1" r="0.45" fill="#555"/><circle cx="8" cy="8" r="0.45" fill="#555"/></g></svg>
<svg style="position:absolute;left:1195.8333333333333px;top:107.2px;" width="14.6" height="14.6" viewBox="0 0 16 16"><circle cx="8" cy="3.8" r="2.9" fill="#dedede"/><path d="M6.9 5.5 H9.1 L9.4 9.0 H6.6 Z" fill="#dedede"/><path d="M2.6 10.6 Q2.6 8.9 4.6 8.9 H11.4 Q13.4 8.9 13.4 10.6 V12 H2.6 Z" fill="#dedede"/><rect x="3.2" y="13" width="9.6" height="1.3" fill="#dedede"/></svg>
<svg style="position:absolute;left:1225.1000000000001px;top:107.2px;" width="14.6" height="14.6" viewBox="0 0 16 16"><circle cx="8" cy="3.8" r="2.9" fill="#dedede"/><path d="M6.9 5.5 H9.1 L9.4 9.0 H6.6 Z" fill="#dedede"/><path d="M2.6 10.6 Q2.6 8.9 4.6 8.9 H11.4 Q13.4 8.9 13.4 10.6 V12 H2.6 Z" fill="#dedede"/><rect x="3.2" y="13" width="9.6" height="1.3" fill="#dedede"/></svg>
<svg style="position:absolute;left:1254.3666666666666px;top:107.2px;" width="14.6" height="14.6" viewBox="0 0 16 16"><path d="M3.4 5.0 C2.6 6.2 1.8 7.2 1.8 8.2 A1.7 1.7 0 0 0 5.2 8.2 C5.2 7.2 4.2 6.2 3.4 5.0 Z" fill="#dedede"/><path d="M15.0 1.2 C15.6 1.6 15.5 2.3 15.1 2.9 L10.2 8.6 L8.7 7.3 L13.8 1.5 C14.2 1.1 14.6 1.0 15.0 1.2 Z" fill="#dedede"/><path d="M8.0 7.9 L9.6 9.3 C9.9 11.4 8.6 13.4 6.2 13.8 L3.8 14.4 C4.7 13.0 4.7 11.5 5.5 10.0 C6.0 8.9 7.0 8.2 8.0 7.9 Z" fill="#dedede"/></svg>
<div style="position:absolute;left:1278.6px;top:110.1px;width:4.50px;height:1.40px;background:#555"></div>
<div style="position:absolute;left:1278.6px;top:112.89999999999999px;width:4.50px;height:1.40px;background:#555"></div>
<div style="position:absolute;left:1278.6px;top:115.69999999999999px;width:4.50px;height:1.40px;background:#555"></div>
<div style="position:absolute;left:1278.6px;top:118.5px;width:4.50px;height:1.40px;background:#555"></div>
<div style="position:absolute;left:1099.7px;top:124.66px;width:88.80px;height:19.45px;background:#272727;border-radius:3.2px"></div>
<div style="position:absolute;left:1100.7px;top:125.66px;width:86.80px;height:17.55px;background:linear-gradient(#65814f,#516b3f);border-radius:2.5px 2.5px 2.5px 2.5px;box-shadow:inset 0 1px 0 rgba(255,255,255,.07)"></div>
<div class="tx" style="left:1144.1px;top:134.435px;font-size:9.3px;font-weight:normal;color:#e2e2e2;text-shadow:0 1px 1px rgba(0,0,0,.85);transform:translate(-50%,-50%) scaleX(0.87);">Eye Help</div>
<div style="position:absolute;left:1188.5px;top:124.66px;width:88.80px;height:19.45px;background:#272727;border-radius:3.2px"></div>
<div style="position:absolute;left:1189.5px;top:125.66px;width:86.80px;height:17.55px;background:linear-gradient(#65814f,#516b3f);border-radius:2.5px 2.5px 2.5px 2.5px;box-shadow:inset 0 1px 0 rgba(255,255,255,.07)"></div>
<div class="tx" style="left:1232.9px;top:134.435px;font-size:9.3px;font-weight:normal;color:#e2e2e2;text-shadow:0 1px 1px rgba(0,0,0,.85);transform:translate(-50%,-50%) scaleX(0.87);">Healing Layer</div>
<div style="position:absolute;left:1278.6px;top:130.51px;width:4.50px;height:1.40px;background:#555"></div>
<div style="position:absolute;left:1278.6px;top:133.31px;width:4.50px;height:1.40px;background:#555"></div>
<div style="position:absolute;left:1278.6px;top:136.10999999999999px;width:4.50px;height:1.40px;background:#555"></div>
<div style="position:absolute;left:1278.6px;top:138.91px;width:4.50px;height:1.40px;background:#555"></div>
<div style="position:absolute;left:1099.7px;top:145.07px;width:177.60px;height:19.45px;background:#272727;border-radius:3.2px"></div>
<div style="position:absolute;left:1100.7px;top:146.07px;width:175.60px;height:17.55px;background:linear-gradient(#4f6daf,#3e5998);border-radius:2.5px 2.5px 2.5px 2.5px;box-shadow:inset 0 1px 0 rgba(255,255,255,.07)"></div>
<div class="tx" style="left:1188.5px;top:154.845px;font-size:9.3px;font-weight:normal;color:#e2e2e2;text-shadow:0 1px 1px rgba(0,0,0,.85);transform:translate(-50%,-50%) scaleX(0.87);">Dodge &amp; Burn</div>
<div style="position:absolute;left:1099.7px;top:165.48000000000002px;width:88.80px;height:19.45px;background:#272727;border-radius:3.2px"></div>
<div style="position:absolute;left:1100.7px;top:166.48000000000002px;width:86.80px;height:17.55px;background:linear-gradient(#4f6daf,#3e5998);border-radius:2.5px 2.5px 2.5px 2.5px;box-shadow:inset 0 1px 0 rgba(255,255,255,.07)"></div>
<div class="tx" style="left:1144.1px;top:175.25500000000002px;font-size:9.3px;font-weight:normal;color:#e2e2e2;text-shadow:0 1px 1px rgba(0,0,0,.85);transform:translate(-50%,-50%) scaleX(0.87);">Dodge</div>
<div style="position:absolute;left:1188.5px;top:165.48000000000002px;width:88.80px;height:19.45px;background:#272727;border-radius:3.2px"></div>
<div style="position:absolute;left:1189.5px;top:166.48000000000002px;width:86.80px;height:17.55px;background:linear-gradient(#4f6daf,#3e5998);border-radius:2.5px 2.5px 2.5px 2.5px;box-shadow:inset 0 1px 0 rgba(255,255,255,.07)"></div>
<div class="tx" style="left:1232.9px;top:175.25500000000002px;font-size:9.3px;font-weight:normal;color:#e2e2e2;text-shadow:0 1px 1px rgba(0,0,0,.85);transform:translate(-50%,-50%) scaleX(0.87);">Burn</div>
<div style="position:absolute;left:1278.6px;top:171.33px;width:4.50px;height:1.40px;background:#555"></div>
<div style="position:absolute;left:1278.6px;top:174.13000000000002px;width:4.50px;height:1.40px;background:#555"></div>
<div style="position:absolute;left:1278.6px;top:176.93px;width:4.50px;height:1.40px;background:#555"></div>
<div style="position:absolute;left:1278.6px;top:179.73000000000002px;width:4.50px;height:1.40px;background:#555"></div>
<div style="position:absolute;left:1099.7px;top:185.89px;width:88.80px;height:19.45px;background:#272727;border-radius:3.2px"></div>
<div style="position:absolute;left:1100.7px;top:186.89px;width:86.80px;height:17.55px;background:linear-gradient(#4f6daf,#3e5998);border-radius:2.5px 2.5px 2.5px 2.5px;box-shadow:inset 0 1px 0 rgba(255,255,255,.07)"></div>
<div class="tx" style="left:1144.1px;top:195.665px;font-size:9.3px;font-weight:normal;color:#e2e2e2;text-shadow:0 1px 1px rgba(0,0,0,.85);transform:translate(-50%,-50%) scaleX(0.87);">50% Gray</div>
<div style="position:absolute;left:1188.5px;top:185.89px;width:88.80px;height:19.45px;background:#272727;border-radius:3.2px"></div>
<div style="position:absolute;left:1189.5px;top:186.89px;width:86.80px;height:17.55px;background:linear-gradient(#4f6daf,#3e5998);border-radius:2.5px 2.5px 2.5px 2.5px;box-shadow:inset 0 1px 0 rgba(255,255,255,.07)"></div>
<div class="tx" style="left:1232.9px;top:195.665px;font-size:9.3px;font-weight:normal;color:#e2e2e2;text-shadow:0 1px 1px rgba(0,0,0,.85);transform:translate(-50%,-50%) scaleX(0.87);">Soft Light</div>
<div style="position:absolute;left:1278.6px;top:191.73999999999998px;width:4.50px;height:1.40px;background:#555"></div>
<div style="position:absolute;left:1278.6px;top:194.54px;width:4.50px;height:1.40px;background:#555"></div>
<div style="position:absolute;left:1278.6px;top:197.33999999999997px;width:4.50px;height:1.40px;background:#555"></div>
<div style="position:absolute;left:1278.6px;top:200.14px;width:4.50px;height:1.40px;background:#555"></div>
<div style="position:absolute;left:1099.7px;top:206.3px;width:88.80px;height:19.45px;background:#272727;border-radius:3.2px"></div>
<div style="position:absolute;left:1100.7px;top:207.3px;width:86.80px;height:17.55px;background:linear-gradient(#5c5c5c,#484848);border-radius:2.5px 2.5px 2.5px 2.5px;box-shadow:inset 0 1px 0 rgba(255,255,255,.07)"></div>
<div class="tx" style="left:1144.1px;top:216.07500000000002px;font-size:9.3px;font-weight:normal;color:#e2e2e2;text-shadow:0 1px 1px rgba(0,0,0,.85);transform:translate(-50%,-50%) scaleX(0.87);">Color Layer</div>
<div style="position:absolute;left:1188.5px;top:206.3px;width:88.80px;height:19.45px;background:#272727;border-radius:3.2px"></div>
<div style="position:absolute;left:1189.5px;top:207.3px;width:86.80px;height:17.55px;background:linear-gradient(#5c5c5c,#484848);border-radius:2.5px 2.5px 2.5px 2.5px;box-shadow:inset 0 1px 0 rgba(255,255,255,.07)"></div>
<div class="tx" style="left:1232.9px;top:216.07500000000002px;font-size:9.3px;font-weight:normal;color:#e2e2e2;text-shadow:0 1px 1px rgba(0,0,0,.85);transform:translate(-50%,-50%) scaleX(0.87);">Saturation Layer</div>
<div style="position:absolute;left:1278.6px;top:212.15px;width:4.50px;height:1.40px;background:#555"></div>
<div style="position:absolute;left:1278.6px;top:214.95000000000002px;width:4.50px;height:1.40px;background:#555"></div>
<div style="position:absolute;left:1278.6px;top:217.75px;width:4.50px;height:1.40px;background:#555"></div>
<div style="position:absolute;left:1278.6px;top:220.55px;width:4.50px;height:1.40px;background:#555"></div>
<div style="position:absolute;left:1099.7px;top:226.71px;width:177.60px;height:19.45px;background:#272727;border-radius:3.2px"></div>
<div style="position:absolute;left:1100.7px;top:227.71px;width:175.60px;height:17.55px;background:linear-gradient(#5c5c5c,#484848);border-radius:2.5px 2.5px 2.5px 2.5px;box-shadow:inset 0 1px 0 rgba(255,255,255,.07)"></div>
<div class="tx" style="left:1188.5px;top:236.485px;font-size:9.3px;font-weight:normal;color:#e2e2e2;text-shadow:0 1px 1px rgba(0,0,0,.85);transform:translate(-50%,-50%) scaleX(0.87);">Desaturate using Luminosity</div>
<div style="position:absolute;left:1099.7px;top:247.12px;width:88.80px;height:19.45px;background:#272727;border-radius:3.2px"></div>
<div style="position:absolute;left:1100.7px;top:248.12px;width:86.80px;height:17.55px;background:linear-gradient(#53817c,#416b66);border-radius:2.5px 2.5px 2.5px 2.5px;box-shadow:inset 0 1px 0 rgba(255,255,255,.07)"></div>
<div class="tx" style="left:1144.1px;top:256.895px;font-size:9.3px;font-weight:normal;color:#e2e2e2;text-shadow:0 1px 1px rgba(0,0,0,.85);transform:translate(-50%,-50%) scaleX(0.87);">Curves</div>
<div style="position:absolute;left:1188.5px;top:247.12px;width:88.80px;height:19.45px;background:#272727;border-radius:3.2px"></div>
<div style="position:absolute;left:1189.5px;top:248.12px;width:86.80px;height:17.55px;background:linear-gradient(#53817c,#416b66);border-radius:2.5px 2.5px 2.5px 2.5px;box-shadow:inset 0 1px 0 rgba(255,255,255,.07)"></div>
<div class="tx" style="left:1232.9px;top:256.895px;font-size:9.3px;font-weight:normal;color:#e2e2e2;text-shadow:0 1px 1px rgba(0,0,0,.85);transform:translate(-50%,-50%) scaleX(0.87);">Color Balance</div>
<div style="position:absolute;left:1278.6px;top:252.97px;width:4.50px;height:1.40px;background:#555"></div>
<div style="position:absolute;left:1278.6px;top:255.77px;width:4.50px;height:1.40px;background:#555"></div>
<div style="position:absolute;left:1278.6px;top:258.57px;width:4.50px;height:1.40px;background:#555"></div>
<div style="position:absolute;left:1278.6px;top:261.37px;width:4.50px;height:1.40px;background:#555"></div>
<div style="position:absolute;left:1100.7px;top:267.88px;width:175.60px;height:17.90px;background:linear-gradient(#4c4c4c 0%,#4a4a4a 46%,#434343 54%,#424242 94%,#454545 100%)"></div>
<div class="tx" style="left:1188.5px;top:277.22999999999996px;font-size:9px;font-weight:normal;color:#c8c8c8;font-style:italic;text-shadow:0 1px 0.5px rgba(0,0,0,.25);transform:translate(-50%,-50%) scaleX(0.92);">Tools</div>
<div style="position:absolute;left:1099.7px;top:287.94px;width:177.60px;height:19.45px;background:#272727;border-radius:3.2px"></div>
<div style="position:absolute;left:1100.7px;top:288.94px;width:175.60px;height:17.55px;background:linear-gradient(#5c5c5c,#484848);border-radius:2.5px 2.5px 2.5px 2.5px;box-shadow:inset 0 1px 0 rgba(255,255,255,.07)"></div>
<div class="tx" style="left:1188.5px;top:297.71500000000003px;font-size:9.3px;font-weight:normal;color:#e2e2e2;text-shadow:0 1px 1px rgba(0,0,0,.85);transform:translate(-50%,-50%) scaleX(0.87);">Stamp Current &amp; Below</div>
<div style="position:absolute;left:1099.7px;top:308.35px;width:177.60px;height:19.45px;background:#272727;border-radius:3.2px"></div>
<div style="position:absolute;left:1100.7px;top:309.35px;width:175.60px;height:17.55px;background:linear-gradient(#5c5c5c,#484848);border-radius:2.5px 2.5px 2.5px 2.5px;box-shadow:inset 0 1px 0 rgba(255,255,255,.07)"></div>
<div class="tx" style="left:1188.5px;top:318.125px;font-size:9.3px;font-weight:normal;color:#e2e2e2;text-shadow:0 1px 1px rgba(0,0,0,.85);transform:translate(-50%,-50%) scaleX(0.87);">Copy to All Other</div>
<div style="position:absolute;left:1099.7px;top:328.76px;width:177.60px;height:19.45px;background:#272727;border-radius:3.2px"></div>
<div style="position:absolute;left:1100.7px;top:329.76px;width:175.60px;height:17.55px;background:linear-gradient(#53817c,#416b66);border-radius:2.5px 2.5px 2.5px 2.5px;box-shadow:inset 0 1px 0 rgba(255,255,255,.07)"></div>
<div class="tx" style="left:1188.5px;top:338.53499999999997px;font-size:9.3px;font-weight:normal;color:#e2e2e2;text-shadow:0 1px 1px rgba(0,0,0,.85);transform:translate(-50%,-50%) scaleX(0.87);">Gradient Map Maker</div>
<div style="position:absolute;left:1099.7px;top:349.17px;width:177.60px;height:19.45px;background:#272727;border-radius:3.2px"></div>
<div style="position:absolute;left:1100.7px;top:350.17px;width:175.60px;height:17.55px;background:linear-gradient(#53817c,#416b66);border-radius:2.5px 2.5px 2.5px 2.5px;box-shadow:inset 0 1px 0 rgba(255,255,255,.07)"></div>
<div class="tx" style="left:1188.5px;top:358.94500000000005px;font-size:9.3px;font-weight:normal;color:#e2e2e2;text-shadow:0 1px 1px rgba(0,0,0,.85);transform:translate(-50%,-50%) scaleX(0.87);">Gradient Map Picker</div>
<div style="position:absolute;left:1099.7px;top:369.58px;width:177.60px;height:19.45px;background:#272727;border-radius:3.2px"></div>
<div style="position:absolute;left:1100.7px;top:370.58px;width:175.60px;height:17.55px;background:linear-gradient(#53817c,#416b66);border-radius:2.5px 2.5px 2.5px 2.5px;box-shadow:inset 0 1px 0 rgba(255,255,255,.07)"></div>
<div class="tx" style="left:1188.5px;top:379.355px;font-size:9.3px;font-weight:normal;color:#e2e2e2;text-shadow:0 1px 1px rgba(0,0,0,.85);transform:translate(-50%,-50%) scaleX(0.87);">Average Color</div>
<div style="position:absolute;left:1099.7px;top:389.99px;width:177.60px;height:19.45px;background:#272727;border-radius:3.2px"></div>
<div style="position:absolute;left:1100.7px;top:390.99px;width:175.60px;height:17.55px;background:linear-gradient(#7649a9,#623791);border-radius:2.5px 2.5px 2.5px 2.5px;box-shadow:inset 0 1px 0 rgba(255,255,255,.07)"></div>
<div class="tx" style="left:1188.5px;top:399.765px;font-size:9.3px;font-weight:normal;color:#e2e2e2;text-shadow:0 1px 1px rgba(0,0,0,.85);transform:translate(-50%,-50%) scaleX(0.87);">Smart Liquify</div>
<div style="position:absolute;left:1099.7px;top:410.4px;width:177.60px;height:19.45px;background:#272727;border-radius:3.2px"></div>
<div style="position:absolute;left:1100.7px;top:411.4px;width:175.60px;height:17.55px;background:linear-gradient(#7649a9,#623791);border-radius:2.5px 2.5px 2.5px 2.5px;box-shadow:inset 0 1px 0 rgba(255,255,255,.07)"></div>
<div class="tx" style="left:1188.5px;top:420.17499999999995px;font-size:9.3px;font-weight:normal;color:#e2e2e2;text-shadow:0 1px 1px rgba(0,0,0,.85);transform:translate(-50%,-50%) scaleX(0.87);">Update Smart Object</div>
<div style="position:absolute;left:1099.7px;top:430.81px;width:177.60px;height:19.45px;background:#272727;border-radius:3.2px"></div>
<div style="position:absolute;left:1100.7px;top:431.81px;width:175.60px;height:17.55px;background:linear-gradient(#5c5c5c,#484848);border-radius:2.5px 2.5px 2.5px 2.5px;box-shadow:inset 0 1px 0 rgba(255,255,255,.07)"></div>
<div class="tx" style="left:1188.5px;top:440.58500000000004px;font-size:9.3px;font-weight:normal;color:#e2e2e2;text-shadow:0 1px 1px rgba(0,0,0,.85);transform:translate(-50%,-50%) scaleX(0.87);">Frequency Separation</div>
<div style="position:absolute;left:1099.7px;top:451.22px;width:177.60px;height:19.45px;background:#272727;border-radius:3.2px"></div>
<div style="position:absolute;left:1100.7px;top:452.22px;width:175.60px;height:17.55px;background:linear-gradient(#5c5c5c,#484848);border-radius:2.5px 2.5px 2.5px 2.5px;box-shadow:inset 0 1px 0 rgba(255,255,255,.07)"></div>
<div class="tx" style="left:1188.5px;top:460.995px;font-size:9.3px;font-weight:normal;color:#e2e2e2;text-shadow:0 1px 1px rgba(0,0,0,.85);transform:translate(-50%,-50%) scaleX(0.87);">FS using High Pass</div>
<div style="position:absolute;left:1099.7px;top:471.63px;width:177.60px;height:19.45px;background:#272727;border-radius:3.2px"></div>
<div style="position:absolute;left:1100.7px;top:472.63px;width:175.60px;height:17.55px;background:linear-gradient(#5c5c5c,#484848);border-radius:2.5px 2.5px 2.5px 2.5px;box-shadow:inset 0 1px 0 rgba(255,255,255,.07)"></div>
<div class="tx" style="left:1188.5px;top:481.405px;font-size:9.3px;font-weight:normal;color:#e2e2e2;text-shadow:0 1px 1px rgba(0,0,0,.85);transform:translate(-50%,-50%) scaleX(0.87);">FS using Median</div>
<div style="position:absolute;left:1099.7px;top:492.04px;width:177.60px;height:19.45px;background:#272727;border-radius:3.2px"></div>
<div style="position:absolute;left:1100.7px;top:493.04px;width:175.60px;height:17.55px;background:linear-gradient(#5c5c5c,#484848);border-radius:2.5px 2.5px 2.5px 2.5px;box-shadow:inset 0 1px 0 rgba(255,255,255,.07)"></div>
<div class="tx" style="left:1188.5px;top:501.81500000000005px;font-size:9.3px;font-weight:normal;color:#e2e2e2;text-shadow:0 1px 1px rgba(0,0,0,.85);transform:translate(-50%,-50%) scaleX(0.87);">Band Stop</div>
<div style="position:absolute;left:1099.7px;top:512.45px;width:177.60px;height:19.45px;background:#272727;border-radius:3.2px"></div>
<div style="position:absolute;left:1100.7px;top:513.45px;width:175.60px;height:17.55px;background:linear-gradient(#5c5c5c,#484848);border-radius:2.5px 2.5px 2.5px 2.5px;box-shadow:inset 0 1px 0 rgba(255,255,255,.07)"></div>
<div class="tx" style="left:1188.5px;top:522.225px;font-size:9.3px;font-weight:normal;color:#e2e2e2;text-shadow:0 1px 1px rgba(0,0,0,.85);transform:translate(-50%,-50%) scaleX(0.87);">Band Stop Contrast</div>
<div style="position:absolute;left:1099.7px;top:532.86px;width:177.60px;height:19.45px;background:#272727;border-radius:3.2px"></div>
<div style="position:absolute;left:1100.7px;top:533.86px;width:175.60px;height:17.55px;background:linear-gradient(#5c5c5c,#484848);border-radius:2.5px 2.5px 2.5px 2.5px;box-shadow:inset 0 1px 0 rgba(255,255,255,.07)"></div>
<div class="tx" style="left:1188.5px;top:542.635px;font-size:9.3px;font-weight:normal;color:#e2e2e2;text-shadow:0 1px 1px rgba(0,0,0,.85);transform:translate(-50%,-50%) scaleX(0.87);">Band Pass</div>
<div class="tx" style="left:521.9px;top:48px;font-size:8.5px;font-weight:bold;color:#e4e4e4;text-shadow:0 1px 1px rgba(0,0,0,.5);transform:translate(-50%,-50%) scaleX(0.88);">#2</div>
<div style="position:absolute;left:404.7px;top:57px;width:235.10px;height:336.90px;background:#474747;border-radius:4px"></div>
<div style="position:absolute;left:404.7px;top:57px;width:235.10px;height:19.40px;background:linear-gradient(#545454,#484848 50%,#474747);border-radius:4px 4px 0 0"></div>
<div style="position:absolute;left:404.7px;top:76.1px;width:235.10px;height:0.50px;background:#4b4b4b"></div>
<div class="tx" style="left:522.25px;top:67.4px;font-size:9px;font-weight:normal;color:#d4d4d4;text-shadow:0 1px 1px rgba(0,0,0,.5);transform:translate(-50%,-50%) scaleX(0.87);">QDP Basics</div>
<div style="position:absolute;left:413.1px;top:82.69999999999999px;width:217.90px;height:17.90px;background:linear-gradient(#4c4c4c 0%,#4a4a4a 46%,#434343 54%,#424242 94%,#454545 100%)"></div>
<div class="tx" style="left:522.05px;top:92.05px;font-size:9px;font-weight:normal;color:#c8c8c8;font-style:italic;text-shadow:0 1px 0.5px rgba(0,0,0,.25);transform:translate(-50%,-50%) scaleX(0.92);">Texture</div>
<div style="position:absolute;left:412.1px;top:102.75999999999999px;width:219.90px;height:19.45px;background:#272727;border-radius:3.2px"></div>
<div style="position:absolute;left:413.1px;top:103.75999999999999px;width:217.90px;height:17.55px;background:linear-gradient(#5c5c5c,#484848);border-radius:2.5px 2.5px 2.5px 2.5px;box-shadow:inset 0 1px 0 rgba(255,255,255,.07)"></div>
<div class="tx" style="left:522.05px;top:112.535px;font-size:9.3px;font-weight:normal;color:#e2e2e2;text-shadow:0 1px 1px rgba(0,0,0,.85);transform:translate(-50%,-50%) scaleX(0.87);">Visual Help Layer</div>
<div style="position:absolute;left:412.1px;top:123.16999999999999px;width:219.90px;height:19.45px;background:#272727;border-radius:3.2px"></div>
<div style="position:absolute;left:413.1px;top:124.16999999999999px;width:217.90px;height:17.55px;background:linear-gradient(#7649a9,#623791);border-radius:2.5px 2.5px 2.5px 2.5px;box-shadow:inset 0 1px 0 rgba(255,255,255,.07)"></div>
<div class="tx" style="left:522.05px;top:132.945px;font-size:9.3px;font-weight:normal;color:#e2e2e2;text-shadow:0 1px 1px rgba(0,0,0,.85);transform:translate(-50%,-50%) scaleX(0.87);">Cleanup</div>
<div style="position:absolute;left:413.1px;top:143.92999999999998px;width:217.90px;height:17.90px;background:linear-gradient(#4c4c4c 0%,#4a4a4a 46%,#434343 54%,#424242 94%,#454545 100%)"></div>
<div class="tx" style="left:522.05px;top:153.27999999999997px;font-size:9px;font-weight:normal;color:#c8c8c8;font-style:italic;text-shadow:0 1px 0.5px rgba(0,0,0,.25);transform:translate(-50%,-50%) scaleX(0.92);">Luma</div>
<div style="position:absolute;left:412.1px;top:163.99px;width:219.90px;height:19.45px;background:#272727;border-radius:3.2px"></div>
<div style="position:absolute;left:413.1px;top:164.99px;width:217.90px;height:17.55px;background:linear-gradient(#983b8d,#7f2979);border-radius:2.5px 2.5px 2.5px 2.5px;box-shadow:inset 0 1px 0 rgba(255,255,255,.07)"></div>
<div class="tx" style="left:522.05px;top:173.76500000000001px;font-size:9.3px;font-weight:normal;color:#e2e2e2;text-shadow:0 1px 1px rgba(0,0,0,.85);transform:translate(-50%,-50%) scaleX(0.87);">Dodge &amp; Burn</div>
<div style="position:absolute;left:412.1px;top:184.39999999999998px;width:219.90px;height:19.45px;background:#272727;border-radius:3.2px"></div>
<div style="position:absolute;left:413.1px;top:185.39999999999998px;width:108.45px;height:17.55px;background:linear-gradient(#5c5c5c,#484848);border-radius:2.5px 0 0 2.5px;box-shadow:inset 0 1px 0 rgba(255,255,255,.07)"></div>
<div class="tx" style="left:467.325px;top:194.17499999999998px;font-size:9.3px;font-weight:normal;color:#e2e2e2;text-shadow:0 1px 1px rgba(0,0,0,.85);transform:translate(-50%,-50%) scaleX(0.87);">Dodge</div>
<div style="position:absolute;left:522.55px;top:185.39999999999998px;width:108.45px;height:17.55px;background:linear-gradient(#5c5c5c,#484848);border-radius:0 2.5px 2.5px 0;box-shadow:inset 0 1px 0 rgba(255,255,255,.07)"></div>
<div class="tx" style="left:576.775px;top:194.17499999999998px;font-size:9.3px;font-weight:normal;color:#e2e2e2;text-shadow:0 1px 1px rgba(0,0,0,.85);transform:translate(-50%,-50%) scaleX(0.87);">Burn</div>
<div style="position:absolute;left:634px;top:190.24999999999997px;width:4.50px;height:1.40px;background:#555"></div>
<div style="position:absolute;left:634px;top:193.04999999999998px;width:4.50px;height:1.40px;background:#555"></div>
<div style="position:absolute;left:634px;top:195.84999999999997px;width:4.50px;height:1.40px;background:#555"></div>
<div style="position:absolute;left:634px;top:198.64999999999998px;width:4.50px;height:1.40px;background:#555"></div>
<div style="position:absolute;left:412.1px;top:204.81px;width:219.90px;height:19.45px;background:#272727;border-radius:3.2px"></div>
<div style="position:absolute;left:413.1px;top:205.81px;width:217.90px;height:17.55px;background:linear-gradient(#be6c35,#a75926);border-radius:2.5px 2.5px 2.5px 2.5px;box-shadow:inset 0 1px 0 rgba(255,255,255,.07)"></div>
<div class="tx" style="left:522.05px;top:214.585px;font-size:9.3px;font-weight:normal;color:#e2e2e2;text-shadow:0 1px 1px rgba(0,0,0,.85);transform:translate(-50%,-50%) scaleX(0.87);">D&amp;B 50% Gray</div>
<div style="position:absolute;left:412.1px;top:225.22px;width:219.90px;height:19.45px;background:#272727;border-radius:3.2px"></div>
<div style="position:absolute;left:413.1px;top:226.22px;width:108.45px;height:17.55px;background:linear-gradient(#ba8d38,#a5772a);border-radius:2.5px 0 0 2.5px;box-shadow:inset 0 1px 0 rgba(255,255,255,.07)"></div>
<div class="tx" style="left:467.325px;top:234.995px;font-size:9.3px;font-weight:normal;color:#e2e2e2;text-shadow:0 1px 1px rgba(0,0,0,.85);transform:translate(-50%,-50%) scaleX(0.87);">FS Median</div>
<div style="position:absolute;left:522.55px;top:226.22px;width:108.45px;height:17.55px;background:linear-gradient(#ba8d38,#a5772a);border-radius:0 2.5px 2.5px 0;box-shadow:inset 0 1px 0 rgba(255,255,255,.07)"></div>
<div class="tx" style="left:576.775px;top:234.995px;font-size:9.3px;font-weight:normal;color:#e2e2e2;text-shadow:0 1px 1px rgba(0,0,0,.85);transform:translate(-50%,-50%) scaleX(0.87);">Band Stop</div>
<div style="position:absolute;left:634px;top:231.07px;width:4.50px;height:1.40px;background:#555"></div>
<div style="position:absolute;left:634px;top:233.87px;width:4.50px;height:1.40px;background:#555"></div>
<div style="position:absolute;left:634px;top:236.67px;width:4.50px;height:1.40px;background:#555"></div>
<div style="position:absolute;left:634px;top:239.47px;width:4.50px;height:1.40px;background:#555"></div>
<div style="position:absolute;left:413.1px;top:245.98px;width:217.90px;height:17.90px;background:linear-gradient(#4c4c4c 0%,#4a4a4a 46%,#434343 54%,#424242 94%,#454545 100%)"></div>
<div class="tx" style="left:522.05px;top:255.32999999999998px;font-size:9px;font-weight:normal;color:#c8c8c8;font-style:italic;text-shadow:0 1px 0.5px rgba(0,0,0,.25);transform:translate(-50%,-50%) scaleX(0.92);">Color Correction</div>
<div style="position:absolute;left:412.1px;top:266.03999999999996px;width:219.90px;height:19.45px;background:#272727;border-radius:3.2px"></div>
<div style="position:absolute;left:413.1px;top:267.03999999999996px;width:108.45px;height:17.55px;background:linear-gradient(#aa4330,#923223);border-radius:2.5px 0 0 2.5px;box-shadow:inset 0 1px 0 rgba(255,255,255,.07)"></div>
<div class="tx" style="left:467.325px;top:275.81499999999994px;font-size:9.3px;font-weight:normal;color:#e2e2e2;text-shadow:0 1px 1px rgba(0,0,0,.85);transform:translate(-50%,-50%) scaleX(0.87);">QDP Skin Perfection</div>
<div style="position:absolute;left:522.55px;top:267.03999999999996px;width:108.45px;height:17.55px;background:linear-gradient(#5c5c5c,#484848);border-radius:0 2.5px 2.5px 0;box-shadow:inset 0 1px 0 rgba(255,255,255,.07)"></div>
<div class="tx" style="left:576.775px;top:275.81499999999994px;font-size:9.3px;font-weight:normal;color:#e2e2e2;text-shadow:0 1px 1px rgba(0,0,0,.85);transform:translate(-50%,-50%) scaleX(0.87);">Gradient Map</div>
<div style="position:absolute;left:634px;top:271.89px;width:4.50px;height:1.40px;background:#555"></div>
<div style="position:absolute;left:634px;top:274.69px;width:4.50px;height:1.40px;background:#555"></div>
<div style="position:absolute;left:634px;top:277.49px;width:4.50px;height:1.40px;background:#555"></div>
<div style="position:absolute;left:634px;top:280.28999999999996px;width:4.50px;height:1.40px;background:#555"></div>
<div style="position:absolute;left:413.1px;top:286.8px;width:217.90px;height:17.90px;background:linear-gradient(#4c4c4c 0%,#4a4a4a 46%,#434343 54%,#424242 94%,#454545 100%)"></div>
<div class="tx" style="left:522.05px;top:296.15px;font-size:9px;font-weight:normal;color:#c8c8c8;font-style:italic;text-shadow:0 1px 0.5px rgba(0,0,0,.25);transform:translate(-50%,-50%) scaleX(0.92);">Color Grading</div>
<div style="position:absolute;left:412.1px;top:306.86px;width:219.90px;height:19.45px;background:#272727;border-radius:3.2px"></div>
<div style="position:absolute;left:413.1px;top:307.86px;width:217.90px;height:17.55px;background:linear-gradient(#4f6daf,#3e5998);border-radius:2.5px 2.5px 2.5px 2.5px;box-shadow:inset 0 1px 0 rgba(255,255,255,.07)"></div>
<div class="tx" style="left:522.05px;top:316.635px;font-size:9.3px;font-weight:normal;color:#e2e2e2;text-shadow:0 1px 1px rgba(0,0,0,.85);transform:translate(-50%,-50%) scaleX(0.87);">QDP Color Genius</div>
<div style="position:absolute;left:412.1px;top:327.27px;width:219.90px;height:19.45px;background:#272727;border-radius:3.2px"></div>
<div style="position:absolute;left:413.1px;top:328.27px;width:217.90px;height:17.55px;background:linear-gradient(#5c5c5c,#484848);border-radius:2.5px 2.5px 2.5px 2.5px;box-shadow:inset 0 1px 0 rgba(255,255,255,.07)"></div>
<div class="tx" style="left:522.05px;top:337.04499999999996px;font-size:9.3px;font-weight:normal;color:#e2e2e2;text-shadow:0 1px 1px rgba(0,0,0,.85);transform:translate(-50%,-50%) scaleX(0.87);">Gradient Map Maker</div>
<div style="position:absolute;left:413.1px;top:348.03px;width:217.90px;height:17.90px;background:linear-gradient(#4c4c4c 0%,#4a4a4a 46%,#434343 54%,#424242 94%,#454545 100%)"></div>
<div class="tx" style="left:522.05px;top:357.37999999999994px;font-size:9px;font-weight:normal;color:#c8c8c8;font-style:italic;text-shadow:0 1px 0.5px rgba(0,0,0,.25);transform:translate(-50%,-50%) scaleX(0.92);">Finishing</div>
<div style="position:absolute;left:412.1px;top:368.09000000000003px;width:219.90px;height:19.45px;background:#272727;border-radius:3.2px"></div>
<div style="position:absolute;left:413.1px;top:369.09000000000003px;width:108.45px;height:17.55px;background:linear-gradient(#5c5c5c,#484848);border-radius:2.5px 0 0 2.5px;box-shadow:inset 0 1px 0 rgba(255,255,255,.07)"></div>
<div class="tx" style="left:467.325px;top:377.865px;font-size:9.3px;font-weight:normal;color:#e2e2e2;text-shadow:0 1px 1px rgba(0,0,0,.85);transform:translate(-50%,-50%) scaleX(0.87);">Sharpening</div>
<div style="position:absolute;left:522.55px;top:369.09000000000003px;width:108.45px;height:17.55px;background:linear-gradient(#5c5c5c,#484848);border-radius:0 2.5px 2.5px 0;box-shadow:inset 0 1px 0 rgba(255,255,255,.07)"></div>
<div class="tx" style="left:576.775px;top:377.865px;font-size:9.3px;font-weight:normal;color:#e2e2e2;text-shadow:0 1px 1px rgba(0,0,0,.85);transform:translate(-50%,-50%) scaleX(0.87);">Add Noise</div>
<div style="position:absolute;left:634px;top:373.94000000000005px;width:4.50px;height:1.40px;background:#555"></div>
<div style="position:absolute;left:634px;top:376.74000000000007px;width:4.50px;height:1.40px;background:#555"></div>
<div style="position:absolute;left:634px;top:379.5400000000001px;width:4.50px;height:1.40px;background:#555"></div>
<div style="position:absolute;left:634px;top:382.34000000000003px;width:4.50px;height:1.40px;background:#555"></div>
<div class="tx" style="left:765.0px;top:48px;font-size:8.5px;font-weight:bold;color:#e4e4e4;text-shadow:0 1px 1px rgba(0,0,0,.5);transform:translate(-50%,-50%) scaleX(0.88);">#3</div>
<div style="position:absolute;left:647.9px;top:57px;width:235.00px;height:112.00px;background:#474747;border-radius:4px"></div>
<div style="position:absolute;left:647.9px;top:57px;width:235.00px;height:19.40px;background:linear-gradient(#545454,#484848 50%,#474747);border-radius:4px 4px 0 0"></div>
<div style="position:absolute;left:647.9px;top:76.1px;width:235.00px;height:0.50px;background:#4b4b4b"></div>
<div class="tx" style="left:765.4px;top:67.4px;font-size:9px;font-weight:normal;color:#d4d4d4;text-shadow:0 1px 1px rgba(0,0,0,.5);transform:translate(-50%,-50%) scaleX(0.84);">PANEL PERSO DEMO</div>
<div style="position:absolute;left:656.0px;top:82.35px;width:219.00px;height:19.45px;background:#272727;border-radius:3.2px"></div>
<div style="position:absolute;left:657.0px;top:83.35px;width:217.00px;height:17.55px;background:linear-gradient(#aa4330,#923223);border-radius:2.5px 2.5px 2.5px 2.5px;box-shadow:inset 0 1px 0 rgba(255,255,255,.07)"></div>
<div class="tx" style="left:765.5px;top:92.425px;font-size:9.6px;font-weight:normal;color:#e2e2e2;text-shadow:0 1px 1px rgba(0,0,0,.85);transform:translate(-50%,-50%) scaleX(0.75);">DODGE &amp; BURN</div>
<div style="position:absolute;left:656px;top:102.75999999999999px;width:219.00px;height:19.45px;background:#272727;border-radius:3.2px"></div>
<div style="position:absolute;left:657.0px;top:103.75999999999999px;width:108.00px;height:17.55px;background:linear-gradient(#5c5c5c,#484848);border-radius:2.5px 0 0 2.5px;box-shadow:inset 0 1px 0 rgba(255,255,255,.07)"></div>
<div class="tx" style="left:711.0px;top:112.535px;font-size:9.3px;font-weight:normal;color:#e2e2e2;text-shadow:0 1px 1px rgba(0,0,0,.85);transform:translate(-50%,-50%) scaleX(0.87);">S&eacute;paration de Fr&eacute;quence</div>
<div style="position:absolute;left:766.0px;top:103.75999999999999px;width:108.00px;height:17.55px;background:linear-gradient(#5c5c5c,#484848);border-radius:0 2.5px 2.5px 0;box-shadow:inset 0 1px 0 rgba(255,255,255,.07)"></div>
<div class="tx" style="left:820.0px;top:112.535px;font-size:9.3px;font-weight:normal;color:#e2e2e2;text-shadow:0 1px 1px rgba(0,0,0,.85);transform:translate(-50%,-50%) scaleX(0.87);">Nettet&eacute;</div>
<div style="position:absolute;left:877px;top:108.60999999999999px;width:4.50px;height:1.40px;background:#555"></div>
<div style="position:absolute;left:877px;top:111.40999999999998px;width:4.50px;height:1.40px;background:#555"></div>
<div style="position:absolute;left:877px;top:114.20999999999998px;width:4.50px;height:1.40px;background:#555"></div>
<div style="position:absolute;left:877px;top:117.00999999999999px;width:4.50px;height:1.40px;background:#555"></div>
<div style="position:absolute;left:656.0px;top:123.16999999999999px;width:219.00px;height:19.45px;background:#272727;border-radius:3.2px"></div>
<div style="position:absolute;left:657.0px;top:124.16999999999999px;width:217.00px;height:17.55px;background:linear-gradient(#65814f,#516b3f);border-radius:2.5px 2.5px 2.5px 2.5px;box-shadow:inset 0 1px 0 rgba(255,255,255,.07)"></div>
<div class="tx" style="left:765.5px;top:133.245px;font-size:9.6px;font-weight:normal;color:#e2e2e2;text-shadow:0 1px 1px rgba(0,0,0,.85);transform:translate(-50%,-50%) scaleX(0.75);">COLOR GENIUS</div>
<div style="position:absolute;left:656.0px;top:143.57999999999998px;width:219.00px;height:19.45px;background:#272727;border-radius:3.2px"></div>
<div style="position:absolute;left:657.0px;top:144.57999999999998px;width:217.00px;height:17.55px;background:linear-gradient(#983b8d,#7f2979);border-radius:2.5px 2.5px 2.5px 2.5px;box-shadow:inset 0 1px 0 rgba(255,255,255,.07)"></div>
<div class="tx" style="left:765.5px;top:153.655px;font-size:9.6px;font-weight:normal;color:#e2e2e2;text-shadow:0 1px 1px rgba(0,0,0,.85);transform:translate(-50%,-50%) scaleX(0.75);">SKIN PERFECTION</div>
<div class="tx" style="left:987.0px;top:48px;font-size:8.5px;font-weight:bold;color:#e4e4e4;text-shadow:0 1px 1px rgba(0,0,0,.5);transform:translate(-50%,-50%) scaleX(0.88);">#4</div>
<div style="position:absolute;left:891px;top:66px;width:192.60px;height:491.70px;background:#474747;border-radius:4px"></div>
<div style="position:absolute;left:891px;top:76.5px;width:192.60px;height:2.00px;background:#474747"></div>
<div style="position:absolute;left:894px;top:60px;width:186.60px;height:16.80px;background:#262626"></div>
<div style="position:absolute;left:891.0px;top:57px;width:95.80px;height:19.80px;background:linear-gradient(#535353,#484848 60%,#474747);border-radius:4px 4px 0 0"></div>
<div class="tx" style="left:938.9px;top:67.0px;font-size:9px;font-weight:normal;color:#d8d8d8;text-shadow:0 1px 1px rgba(0,0,0,.6);transform:translate(-50%,-50%) scaleX(0.9);">Retouch</div>
<div style="position:absolute;left:987.8px;top:57px;width:95.80px;height:19.80px;background:linear-gradient(#3b3b3b,#343434);border-radius:4px 4px 0 0;box-shadow:inset 0 -1px 0 #2c2c2c"></div>
<div class="tx" style="left:1035.6999999999998px;top:67.0px;font-size:9px;font-weight:normal;color:#a0a0a0;text-shadow:0 1px 1px rgba(0,0,0,.6);transform:translate(-50%,-50%) scaleX(0.9);">Document</div>
<div style="position:absolute;left:891px;top:77.9px;width:192.60px;height:0.70px;background:#2e2e2e"></div>
<div style="position:absolute;left:894px;top:81.6px;width:186.60px;height:16.90px;background:#262626"></div>
<div style="position:absolute;left:891.0px;top:78.6px;width:63.70px;height:19.90px;background:linear-gradient(#535353,#484848 60%,#474747);border-radius:4px 4px 0 0"></div>
<div class="tx" style="left:922.8499999999999px;top:88.64999999999999px;font-size:9px;font-weight:normal;color:#d8d8d8;text-shadow:0 1px 1px rgba(0,0,0,.6);transform:translate(-50%,-50%) scaleX(0.9);">Workflow</div>
<div style="position:absolute;left:955.6999999999999px;top:78.6px;width:63.20px;height:19.90px;background:linear-gradient(#3b3b3b,#343434);border-radius:4px 4px 0 0;box-shadow:inset 0 -1px 0 #2c2c2c"></div>
<div class="tx" style="left:987.3px;top:88.64999999999999px;font-size:9px;font-weight:normal;color:#a0a0a0;text-shadow:0 1px 1px rgba(0,0,0,.6);transform:translate(-50%,-50%) scaleX(0.9);">SO</div>
<div style="position:absolute;left:1019.9px;top:78.6px;width:63.70px;height:19.90px;background:linear-gradient(#3b3b3b,#343434);border-radius:4px 4px 0 0;box-shadow:inset 0 -1px 0 #2c2c2c"></div>
<div class="tx" style="left:1051.75px;top:88.64999999999999px;font-size:9px;font-weight:normal;color:#a0a0a0;text-shadow:0 1px 1px rgba(0,0,0,.6);transform:translate(-50%,-50%) scaleX(0.9);">FS</div>
<div style="position:absolute;left:899.0px;top:104.35px;width:88.30px;height:19.45px;background:#272727;border-radius:3.2px"></div>
<div style="position:absolute;left:900.0px;top:105.35px;width:86.30px;height:17.55px;background:linear-gradient(#53817c,#416b66);border-radius:2.5px 2.5px 2.5px 2.5px;box-shadow:inset 0 1px 0 rgba(255,255,255,.07)"></div>
<div class="tx" style="left:943.15px;top:114.125px;font-size:9.3px;font-weight:normal;color:#e2e2e2;text-shadow:0 1px 1px rgba(0,0,0,.85);transform:translate(-50%,-50%) scaleX(0.87);">Folder Setup</div>
<div style="position:absolute;left:987.3px;top:104.35px;width:88.30px;height:19.45px;background:#272727;border-radius:3.2px"></div>
<div style="position:absolute;left:988.3px;top:105.35px;width:86.30px;height:17.55px;background:linear-gradient(#53817c,#416b66);border-radius:2.5px 2.5px 2.5px 2.5px;box-shadow:inset 0 1px 0 rgba(255,255,255,.07)"></div>
<div class="tx" style="left:1031.4499999999998px;top:114.125px;font-size:9.3px;font-weight:normal;color:#e2e2e2;text-shadow:0 1px 1px rgba(0,0,0,.85);transform:translate(-50%,-50%) scaleX(0.87);">2-Up Vertical</div>
<div style="position:absolute;left:1077.6px;top:110.19999999999999px;width:4.50px;height:1.40px;background:#555"></div>
<div style="position:absolute;left:1077.6px;top:112.99999999999999px;width:4.50px;height:1.40px;background:#555"></div>
<div style="position:absolute;left:1077.6px;top:115.79999999999998px;width:4.50px;height:1.40px;background:#555"></div>
<div style="position:absolute;left:1077.6px;top:118.6px;width:4.50px;height:1.40px;background:#555"></div>
<div style="position:absolute;left:899.0px;top:124.75999999999999px;width:176.60px;height:19.45px;background:#272727;border-radius:3.2px"></div>
<div style="position:absolute;left:900.0px;top:125.75999999999999px;width:174.60px;height:17.55px;background:linear-gradient(#65814f,#516b3f);border-radius:2.5px 2.5px 2.5px 2.5px;box-shadow:inset 0 1px 0 rgba(255,255,255,.07)"></div>
<div class="tx" style="left:987.3px;top:134.535px;font-size:9.3px;font-weight:normal;color:#e2e2e2;text-shadow:0 1px 1px rgba(0,0,0,.85);transform:translate(-50%,-50%) scaleX(0.87);">Eye Help</div>
<div style="position:absolute;left:900px;top:145.51999999999998px;width:174.60px;height:17.90px;background:linear-gradient(#4c4c4c 0%,#4a4a4a 46%,#434343 54%,#424242 94%,#454545 100%)"></div>
<div class="tx" style="left:987.3px;top:154.86999999999998px;font-size:9px;font-weight:normal;color:#c8c8c8;font-style:italic;text-shadow:0 1px 0.5px rgba(0,0,0,.25);transform:translate(-50%,-50%) scaleX(0.92);">Repair</div>
<svg style="position:absolute;left:910.36px;top:168.73px;" width="14.2" height="14.2" viewBox="0 0 16 16"><g transform="rotate(-45 8.8 8.8)"><rect x="0.8" y="5.6" width="16" height="6.4" rx="1.5" fill="#dedede"/><rect x="6.2" y="5.6" width="5.2" height="6.4" fill="#5a5a5a"/><rect x="6.8" y="6.2" width="4" height="5.2" fill="#dedede"/><rect x="7.6" y="7" width="2.4" height="3.6" fill="#7a7a7a"/><rect x="5.7" y="5.6" width="0.6" height="6.4" fill="#474747"/><rect x="11.3" y="5.6" width="0.6" height="6.4" fill="#474747"/></g><path d="M1.2 7.2 A4.2 4.2 0 0 1 7.6 1.4" fill="none" stroke="#dedede" stroke-width="0.7" stroke-dasharray="1 0.9"/></svg>
<svg style="position:absolute;left:945.28px;top:168.73px;" width="14.2" height="14.2" viewBox="0 0 16 16"><g transform="rotate(-45 8 8)"><rect x="-0.6" y="4.5" width="17.2" height="7" rx="1.6" fill="#dedede"/><rect x="4.6" y="4.5" width="0.7" height="7" fill="#474747"/><rect x="10.7" y="4.5" width="0.7" height="7" fill="#474747"/><rect x="5.9" y="5.5" width="4.2" height="5" fill="none" stroke="#5e5e5e" stroke-width="0.6"/><circle cx="7.1" cy="6.9" r="0.45" fill="#555"/><circle cx="8.9" cy="6.9" r="0.45" fill="#555"/><circle cx="7.1" cy="9.1" r="0.45" fill="#555"/><circle cx="8.9" cy="9.1" r="0.45" fill="#555"/><circle cx="8" cy="8" r="0.45" fill="#555"/></g></svg>
<svg style="position:absolute;left:980.1999999999999px;top:168.73px;" width="14.2" height="14.2" viewBox="0 0 16 16"><rect x="2.6" y="3.2" width="10.8" height="9.6" fill="#6a6a6a" stroke="#dedede" stroke-width="1.1" stroke-dasharray="1.1 0.8"/><rect x="3.8" y="4.4" width="8.4" height="7.2" fill="#6e6e6e"/></svg>
<svg style="position:absolute;left:1015.1199999999999px;top:168.73px;" width="14.2" height="14.2" viewBox="0 0 16 16"><circle cx="8" cy="3.8" r="2.9" fill="#dedede"/><path d="M6.9 5.5 H9.1 L9.4 9.0 H6.6 Z" fill="#dedede"/><path d="M2.6 10.6 Q2.6 8.9 4.6 8.9 H11.4 Q13.4 8.9 13.4 10.6 V12 H2.6 Z" fill="#dedede"/><rect x="3.2" y="13" width="9.6" height="1.3" fill="#dedede"/></svg>
<svg style="position:absolute;left:1050.04px;top:168.73px;" width="14.2" height="14.2" viewBox="0 0 16 16"><circle cx="8" cy="3.6" r="2.4" fill="#dedede"/><path d="M7.0 4.8 H9.0 L9.3 8.2 H6.7 Z" fill="#dedede"/><path d="M2.2 9.8 Q2.2 8.0 4.2 8.0 H11.8 Q13.8 8.0 13.8 9.8 V11.4 H2.2 Z" fill="#dedede"/><rect x="2.2" y="12" width="11.6" height="2.4" fill="#dedede" opacity="0.8"/></svg>
<div style="position:absolute;left:1077.6px;top:171.42999999999998px;width:4.50px;height:1.40px;background:#555"></div>
<div style="position:absolute;left:1077.6px;top:174.23px;width:4.50px;height:1.40px;background:#555"></div>
<div style="position:absolute;left:1077.6px;top:177.02999999999997px;width:4.50px;height:1.40px;background:#555"></div>
<div style="position:absolute;left:1077.6px;top:179.82999999999998px;width:4.50px;height:1.40px;background:#555"></div>
<div style="position:absolute;left:899.0px;top:185.99px;width:176.60px;height:19.45px;background:#272727;border-radius:3.2px"></div>
<div style="position:absolute;left:900.0px;top:186.99px;width:174.60px;height:17.55px;background:linear-gradient(#4f6daf,#3e5998);border-radius:2.5px 2.5px 2.5px 2.5px;box-shadow:inset 0 1px 0 rgba(255,255,255,.07)"></div>
<div class="tx" style="left:987.3px;top:195.76500000000001px;font-size:9.3px;font-weight:normal;color:#e2e2e2;text-shadow:0 1px 1px rgba(0,0,0,.85);transform:translate(-50%,-50%) scaleX(0.87);">Stamp Current &amp; Below</div>
<div style="position:absolute;left:899.0px;top:206.39999999999998px;width:176.60px;height:19.45px;background:#272727;border-radius:3.2px"></div>
<div style="position:absolute;left:900.0px;top:207.39999999999998px;width:174.60px;height:17.55px;background:linear-gradient(#65814f,#516b3f);border-radius:2.5px 2.5px 2.5px 2.5px;box-shadow:inset 0 1px 0 rgba(255,255,255,.07)"></div>
<div class="tx" style="left:987.3px;top:216.17499999999998px;font-size:9.3px;font-weight:normal;color:#e2e2e2;text-shadow:0 1px 1px rgba(0,0,0,.85);transform:translate(-50%,-50%) scaleX(0.87);">Healing with Help</div>
<div style="position:absolute;left:899.0px;top:226.81px;width:176.60px;height:19.45px;background:#272727;border-radius:3.2px"></div>
<div style="position:absolute;left:900.0px;top:227.81px;width:174.60px;height:17.55px;background:linear-gradient(#ba8d38,#a5772a);border-radius:2.5px 2.5px 2.5px 2.5px;box-shadow:inset 0 1px 0 rgba(255,255,255,.07)"></div>
<div class="tx" style="left:987.3px;top:236.585px;font-size:9.3px;font-weight:normal;color:#e2e2e2;text-shadow:0 1px 1px rgba(0,0,0,.85);transform:translate(-50%,-50%) scaleX(0.87);">Healing</div>
<div style="position:absolute;left:900px;top:247.57px;width:174.60px;height:17.90px;background:linear-gradient(#4c4c4c 0%,#4a4a4a 46%,#434343 54%,#424242 94%,#454545 100%)"></div>
<div class="tx" style="left:987.3px;top:256.91999999999996px;font-size:9px;font-weight:normal;color:#c8c8c8;font-style:italic;text-shadow:0 1px 0.5px rgba(0,0,0,.25);transform:translate(-50%,-50%) scaleX(0.92);">Dodge &amp; Burn</div>
<svg style="position:absolute;left:910.36px;top:270.78px;" width="14.2" height="14.2" viewBox="0 0 16 16"><path d="M13.6 1.2 C14.3 1.6 14.2 2.4 13.7 3 L8.6 8.8 L7.0 7.4 L12.3 1.5 C12.7 1.1 13.2 1.0 13.6 1.2 Z" fill="#dedede"/><path d="M6.3 8.0 L8.0 9.5 C8.3 11.6 6.9 13.6 4.4 14.0 L1.8 14.6 C2.8 13.2 2.8 11.6 3.6 10.0 C4.2 8.9 5.2 8.2 6.3 8.0 Z" fill="#dedede"/></svg>
<svg style="position:absolute;left:945.28px;top:270.78px;" width="14.2" height="14.2" viewBox="0 0 16 16"><path d="M13.4 1.4 C14.2 1.8 14.3 2.8 13.6 3.6 L9.2 8.8 L7.2 7.0 L11.8 2.0 C12.3 1.4 12.9 1.2 13.4 1.4 Z" fill="#dedede"/><path d="M6.4 7.6 L8.4 9.4 C8.6 11.8 7.0 14.4 3.8 14.4 C2.6 14.4 1.6 13.8 1.6 13.0 C3.6 13.2 4.0 12.0 4.6 10.2 C5.0 8.8 5.6 8.0 6.4 7.6 Z" fill="#dedede"/></svg>
<svg style="position:absolute;left:980.1999999999999px;top:270.78px;" width="14.2" height="14.2" viewBox="0 0 16 16"><circle cx="9.6" cy="5.8" r="4.6" fill="#dedede"/><path d="M6.4 9.4 L1.4 14.6" stroke="#dedede" stroke-width="1.4" stroke-linecap="round"/></svg>
<svg style="position:absolute;left:1015.1199999999999px;top:270.78px;" width="14.2" height="14.2" viewBox="0 0 16 16"><path d="M1.4 6.6 C1.4 3.8 5.0 3.2 8.0 3.6 C11.2 4.0 12.6 5.4 14.6 7.0 C13.6 7.6 13.6 9.0 14.2 10.6 C11.6 9.8 9.6 11.6 6.6 11.2 C3.4 10.8 1.4 9.2 1.4 6.6 Z" fill="#dedede"/><circle cx="4.6" cy="6.6" r="1.6" fill="#474747"/><circle cx="4.6" cy="6.6" r="0.7" fill="#dedede"/></svg>
<svg style="position:absolute;left:1050.04px;top:270.78px;" width="14.2" height="14.2" viewBox="0 0 16 16"><path d="M8 1.2 C6.6 4.0 3.8 6.8 3.8 10.0 A4.2 4.2 0 0 0 12.2 10.0 C12.2 6.8 9.4 4.0 8 1.2 Z" fill="#dedede"/></svg>
<div style="position:absolute;left:1077.6px;top:273.48px;width:4.50px;height:1.40px;background:#555"></div>
<div style="position:absolute;left:1077.6px;top:276.28000000000003px;width:4.50px;height:1.40px;background:#555"></div>
<div style="position:absolute;left:1077.6px;top:279.08000000000004px;width:4.50px;height:1.40px;background:#555"></div>
<div style="position:absolute;left:1077.6px;top:281.88px;width:4.50px;height:1.40px;background:#555"></div>
<div style="position:absolute;left:899.0px;top:288.03999999999996px;width:176.60px;height:19.45px;background:#272727;border-radius:3.2px"></div>
<div style="position:absolute;left:900.0px;top:289.03999999999996px;width:174.60px;height:17.55px;background:linear-gradient(#65814f,#516b3f);border-radius:2.5px 2.5px 2.5px 2.5px;box-shadow:inset 0 1px 0 rgba(255,255,255,.07)"></div>
<div class="tx" style="left:987.3px;top:297.81499999999994px;font-size:9.3px;font-weight:normal;color:#e2e2e2;text-shadow:0 1px 1px rgba(0,0,0,.85);transform:translate(-50%,-50%) scaleX(0.87);">Dodge &amp; Burn with Help</div>
<div style="position:absolute;left:899.0px;top:308.45px;width:176.60px;height:19.45px;background:#272727;border-radius:3.2px"></div>
<div style="position:absolute;left:900.0px;top:309.45px;width:174.60px;height:17.55px;background:linear-gradient(#4f6daf,#3e5998);border-radius:2.5px 2.5px 2.5px 2.5px;box-shadow:inset 0 1px 0 rgba(255,255,255,.07)"></div>
<div class="tx" style="left:987.3px;top:318.225px;font-size:9.3px;font-weight:normal;color:#e2e2e2;text-shadow:0 1px 1px rgba(0,0,0,.85);transform:translate(-50%,-50%) scaleX(0.87);">Dodge &amp; Burn</div>
<div style="position:absolute;left:899px;top:328.86px;width:176.60px;height:19.45px;background:#272727;border-radius:3.2px"></div>
<div style="position:absolute;left:900.0px;top:329.86px;width:86.80px;height:17.55px;background:linear-gradient(#4f6daf,#3e5998);border-radius:2.5px 0 0 2.5px;box-shadow:inset 0 1px 0 rgba(255,255,255,.07)"></div>
<div class="tx" style="left:943.4px;top:338.635px;font-size:9.3px;font-weight:normal;color:#e2e2e2;text-shadow:0 1px 1px rgba(0,0,0,.85);transform:translate(-50%,-50%) scaleX(0.87);">Dodge</div>
<div style="position:absolute;left:987.8px;top:329.86px;width:86.80px;height:17.55px;background:linear-gradient(#4f6daf,#3e5998);border-radius:0 2.5px 2.5px 0;box-shadow:inset 0 1px 0 rgba(255,255,255,.07)"></div>
<div class="tx" style="left:1031.1999999999998px;top:338.635px;font-size:9.3px;font-weight:normal;color:#e2e2e2;text-shadow:0 1px 1px rgba(0,0,0,.85);transform:translate(-50%,-50%) scaleX(0.87);">Burn</div>
<div style="position:absolute;left:1077.6px;top:334.71000000000004px;width:4.50px;height:1.40px;background:#555"></div>
<div style="position:absolute;left:1077.6px;top:337.51000000000005px;width:4.50px;height:1.40px;background:#555"></div>
<div style="position:absolute;left:1077.6px;top:340.31000000000006px;width:4.50px;height:1.40px;background:#555"></div>
<div style="position:absolute;left:1077.6px;top:343.11px;width:4.50px;height:1.40px;background:#555"></div>
<div style="position:absolute;left:899px;top:349.27px;width:176.60px;height:19.45px;background:#272727;border-radius:3.2px"></div>
<div style="position:absolute;left:900.0px;top:350.27px;width:86.80px;height:17.55px;background:linear-gradient(#53817c,#416b66);border-radius:2.5px 0 0 2.5px;box-shadow:inset 0 1px 0 rgba(255,255,255,.07)"></div>
<div class="tx" style="left:943.4px;top:359.04499999999996px;font-size:9.3px;font-weight:normal;color:#e2e2e2;text-shadow:0 1px 1px rgba(0,0,0,.85);transform:translate(-50%,-50%) scaleX(0.87);">Gray Soft Light</div>
<div style="position:absolute;left:987.8px;top:350.27px;width:86.80px;height:17.55px;background:linear-gradient(#53817c,#416b66);border-radius:0 2.5px 2.5px 0;box-shadow:inset 0 1px 0 rgba(255,255,255,.07)"></div>
<div class="tx" style="left:1031.1999999999998px;top:359.04499999999996px;font-size:9.3px;font-weight:normal;color:#e2e2e2;text-shadow:0 1px 1px rgba(0,0,0,.85);transform:translate(-50%,-50%) scaleX(0.87);">Blank Soft Light</div>
<div style="position:absolute;left:1077.6px;top:355.12px;width:4.50px;height:1.40px;background:#555"></div>
<div style="position:absolute;left:1077.6px;top:357.92px;width:4.50px;height:1.40px;background:#555"></div>
<div style="position:absolute;left:1077.6px;top:360.72px;width:4.50px;height:1.40px;background:#555"></div>
<div style="position:absolute;left:1077.6px;top:363.52px;width:4.50px;height:1.40px;background:#555"></div>
<div style="position:absolute;left:900px;top:370.03px;width:174.60px;height:17.90px;background:linear-gradient(#4c4c4c 0%,#4a4a4a 46%,#434343 54%,#424242 94%,#454545 100%)"></div>
<div class="tx" style="left:987.3px;top:379.37999999999994px;font-size:9px;font-weight:normal;color:#c8c8c8;font-style:italic;text-shadow:0 1px 0.5px rgba(0,0,0,.25);transform:translate(-50%,-50%) scaleX(0.92);">Selective Saturation</div>
<div style="position:absolute;left:899.0px;top:390.09000000000003px;width:176.60px;height:19.45px;background:#272727;border-radius:3.2px"></div>
<div style="position:absolute;left:900.0px;top:391.09000000000003px;width:174.60px;height:17.55px;background:linear-gradient(#65814f,#516b3f);border-radius:2.5px 2.5px 2.5px 2.5px;box-shadow:inset 0 1px 0 rgba(255,255,255,.07)"></div>
<div class="tx" style="left:987.3px;top:399.865px;font-size:9.3px;font-weight:normal;color:#e2e2e2;text-shadow:0 1px 1px rgba(0,0,0,.85);transform:translate(-50%,-50%) scaleX(0.87);">Saturate &amp; Desaturate with Help</div>
<div style="position:absolute;left:899.0px;top:410.5px;width:176.60px;height:19.45px;background:#272727;border-radius:3.2px"></div>
<div style="position:absolute;left:900.0px;top:411.5px;width:174.60px;height:17.55px;background:linear-gradient(#7649a9,#623791);border-radius:2.5px 2.5px 2.5px 2.5px;box-shadow:inset 0 1px 0 rgba(255,255,255,.07)"></div>
<div class="tx" style="left:987.3px;top:420.275px;font-size:9.3px;font-weight:normal;color:#e2e2e2;text-shadow:0 1px 1px rgba(0,0,0,.85);transform:translate(-50%,-50%) scaleX(0.87);">Saturate &amp; Desaturate</div>
<div style="position:absolute;left:899px;top:430.90999999999997px;width:176.60px;height:19.45px;background:#272727;border-radius:3.2px"></div>
<div style="position:absolute;left:900.0px;top:431.90999999999997px;width:86.80px;height:17.55px;background:linear-gradient(#7649a9,#623791);border-radius:2.5px 0 0 2.5px;box-shadow:inset 0 1px 0 rgba(255,255,255,.07)"></div>
<div class="tx" style="left:943.4px;top:440.68499999999995px;font-size:9.3px;font-weight:normal;color:#e2e2e2;text-shadow:0 1px 1px rgba(0,0,0,.85);transform:translate(-50%,-50%) scaleX(0.87);">Saturate</div>
<div style="position:absolute;left:987.8px;top:431.90999999999997px;width:86.80px;height:17.55px;background:linear-gradient(#7649a9,#623791);border-radius:0 2.5px 2.5px 0;box-shadow:inset 0 1px 0 rgba(255,255,255,.07)"></div>
<div class="tx" style="left:1031.1999999999998px;top:440.68499999999995px;font-size:9.3px;font-weight:normal;color:#e2e2e2;text-shadow:0 1px 1px rgba(0,0,0,.85);transform:translate(-50%,-50%) scaleX(0.87);">Desaturate</div>
<div style="position:absolute;left:1077.6px;top:436.76px;width:4.50px;height:1.40px;background:#555"></div>
<div style="position:absolute;left:1077.6px;top:439.56px;width:4.50px;height:1.40px;background:#555"></div>
<div style="position:absolute;left:1077.6px;top:442.36px;width:4.50px;height:1.40px;background:#555"></div>
<div style="position:absolute;left:1077.6px;top:445.15999999999997px;width:4.50px;height:1.40px;background:#555"></div>
<div style="position:absolute;left:900px;top:451.6700000000001px;width:174.60px;height:17.90px;background:linear-gradient(#4c4c4c 0%,#4a4a4a 46%,#434343 54%,#424242 94%,#454545 100%)"></div>
<div class="tx" style="left:987.3px;top:461.02000000000004px;font-size:9px;font-weight:normal;color:#c8c8c8;font-style:italic;text-shadow:0 1px 0.5px rgba(0,0,0,.25);transform:translate(-50%,-50%) scaleX(0.92);">Color Correction</div>
<svg style="position:absolute;left:910.36px;top:474.88px;" width="14.2" height="14.2" viewBox="0 0 16 16"><ellipse cx="8.8" cy="6.2" rx="6.0" ry="4.2" fill="none" stroke="#dedede" stroke-width="1.1"/><path d="M3.6 8.6 C2.6 10.4 3.6 11.8 5.0 11.4 C4.4 12.6 4.6 13.6 4.8 15" fill="none" stroke="#dedede" stroke-width="1.1"/></svg>
<svg style="position:absolute;left:945.28px;top:474.88px;" width="14.2" height="14.2" viewBox="0 0 16 16"><rect x="1.6" y="2" width="12.8" height="11.6" fill="none" stroke="#dedede" stroke-width="0.9"/><path d="M1.6 5.8 H14.4 M1.6 9.7 H14.4 M5.9 2 V13.6 M10.1 2 V13.6" stroke="#dedede" stroke-width="0.6" opacity="0.7"/><path d="M2 13.2 C7 13 8 3 14 2.4" fill="none" stroke="#dedede" stroke-width="1.2"/></svg>
<svg style="position:absolute;left:980.1999999999999px;top:474.88px;" width="14.2" height="14.2" viewBox="0 0 16 16"><path d="M8 1.6 V3.2 M2.4 4.4 H13.6" stroke="#dedede" stroke-width="1"/><circle cx="8" cy="2.6" r="1.2" fill="#dedede"/><path d="M3.4 4.6 L1 10 M3.4 4.6 L5.8 10 M12.6 4.6 L10.2 10 M12.6 4.6 L15 10" stroke="#dedede" stroke-width="0.7"/><path d="M0.8 10 H6.0 A2.6 2.6 0 0 1 0.8 10 Z M10 10 H15.2 A2.6 2.6 0 0 1 10 10 Z" fill="#dedede"/></svg>
<svg style="position:absolute;left:1015.1199999999999px;top:474.88px;" width="14.2" height="14.2" viewBox="0 0 16 16"><rect x="1.2" y="2.4" width="13.6" height="11.2" fill="#dedede"/><path d="M2.4 3.6 L8 8.4 L13.6 3.6 Z" fill="#555"/><path d="M2.4 12.4 L8 8.4 L13.6 12.4 Z" fill="#999"/></svg>
<svg style="position:absolute;left:1050.04px;top:474.88px;" width="14.2" height="14.2" viewBox="0 0 16 16"><rect x="1.2" y="2.4" width="13.6" height="11.2" fill="#dedede"/><rect x="2.2" y="3.4" width="2.6" height="3.6" fill="#555"/><rect x="5.8" y="3.4" width="2.6" height="3.6" fill="#555"/><rect x="9.4" y="3.4" width="2.6" height="3.6" fill="#555"/><defs><linearGradient id="gm" x1="0" x2="1"><stop offset="0" stop-color="#333"/><stop offset="1" stop-color="#eee"/></linearGradient></defs><rect x="2.2" y="8" width="11.6" height="4.6" fill="url(#gm)"/></svg>
<div style="position:absolute;left:1077.6px;top:477.58000000000004px;width:4.50px;height:1.40px;background:#555"></div>
<div style="position:absolute;left:1077.6px;top:480.38000000000005px;width:4.50px;height:1.40px;background:#555"></div>
<div style="position:absolute;left:1077.6px;top:483.18000000000006px;width:4.50px;height:1.40px;background:#555"></div>
<div style="position:absolute;left:1077.6px;top:485.98px;width:4.50px;height:1.40px;background:#555"></div>
<div style="position:absolute;left:899.0px;top:492.14px;width:58.87px;height:19.45px;background:#272727;border-radius:3.2px"></div>
<div style="position:absolute;left:900.0px;top:493.14px;width:56.87px;height:17.55px;background:linear-gradient(#983b8d,#7f2979);border-radius:2.5px 2.5px 2.5px 2.5px;box-shadow:inset 0 1px 0 rgba(255,255,255,.07)"></div>
<div class="tx" style="left:928.4333333333334px;top:501.91499999999996px;font-size:9.3px;font-weight:normal;color:#e2e2e2;text-shadow:0 1px 1px rgba(0,0,0,.85);transform:translate(-50%,-50%) scaleX(0.87);">Color</div>
<div style="position:absolute;left:957.8666666666667px;top:492.14px;width:58.87px;height:19.45px;background:#272727;border-radius:3.2px"></div>
<div style="position:absolute;left:958.8666666666667px;top:493.14px;width:56.87px;height:17.55px;background:linear-gradient(#7649a9,#623791);border-radius:2.5px 2.5px 2.5px 2.5px;box-shadow:inset 0 1px 0 rgba(255,255,255,.07)"></div>
<div class="tx" style="left:987.3px;top:501.91499999999996px;font-size:9.3px;font-weight:normal;color:#e2e2e2;text-shadow:0 1px 1px rgba(0,0,0,.85);transform:translate(-50%,-50%) scaleX(0.87);">Saturation</div>
<div style="position:absolute;left:1016.7333333333332px;top:492.14px;width:58.87px;height:19.45px;background:#272727;border-radius:3.2px"></div>
<div style="position:absolute;left:1017.7333333333332px;top:493.14px;width:56.87px;height:17.55px;background:linear-gradient(#be6c35,#a75926);border-radius:2.5px 2.5px 2.5px 2.5px;box-shadow:inset 0 1px 0 rgba(255,255,255,.07)"></div>
<div class="tx" style="left:1046.1666666666665px;top:501.91499999999996px;font-size:9.3px;font-weight:normal;color:#e2e2e2;text-shadow:0 1px 1px rgba(0,0,0,.85);transform:translate(-50%,-50%) scaleX(0.87);">Hue</div>
<div style="position:absolute;left:1077.6px;top:497.99px;width:4.50px;height:1.40px;background:#555"></div>
<div style="position:absolute;left:1077.6px;top:500.79px;width:4.50px;height:1.40px;background:#555"></div>
<div style="position:absolute;left:1077.6px;top:503.59000000000003px;width:4.50px;height:1.40px;background:#555"></div>
<div style="position:absolute;left:1077.6px;top:506.39px;width:4.50px;height:1.40px;background:#555"></div>
<div style="position:absolute;left:899.0px;top:512.55px;width:176.60px;height:19.45px;background:#272727;border-radius:3.2px"></div>
<div style="position:absolute;left:900.0px;top:513.55px;width:174.60px;height:17.55px;background:linear-gradient(#4f6daf,#3e5998);border-radius:2.5px 2.5px 2.5px 2.5px;box-shadow:inset 0 1px 0 rgba(255,255,255,.07)"></div>
<div class="tx" style="left:987.3px;top:522.3249999999999px;font-size:9.3px;font-weight:normal;color:#e2e2e2;text-shadow:0 1px 1px rgba(0,0,0,.85);transform:translate(-50%,-50%) scaleX(0.87);">Gradient Map Maker</div>
<div style="position:absolute;left:899.0px;top:532.96px;width:176.60px;height:19.45px;background:#272727;border-radius:3.2px"></div>
<div style="position:absolute;left:900.0px;top:533.96px;width:174.60px;height:17.55px;background:linear-gradient(#53817c,#416b66);border-radius:2.5px 2.5px 2.5px 2.5px;box-shadow:inset 0 1px 0 rgba(255,255,255,.07)"></div>
<div class="tx" style="left:987.3px;top:542.735px;font-size:9.3px;font-weight:normal;color:#e2e2e2;text-shadow:0 1px 1px rgba(0,0,0,.85);transform:translate(-50%,-50%) scaleX(0.87);">Desaturate using Channel Mixer</div>
<svg style="position:absolute;left:970px;top:590px" width="330" height="155" viewBox="970 590 330 155"><path d="M992 691 C 1008 668 1030 642 1053 631 C 1063 627 1069 635 1064 643 C 1058 652 1045 660 1034 664" fill="none" stroke="#2b2b2b" stroke-width="6.4" stroke-linecap="round" stroke-linejoin="round"/><path d="M1040 644 C 1025 660 1009 676 994 689" fill="none" stroke="#2b2b2b" stroke-width="4.6" stroke-linecap="round" stroke-linejoin="round"/><path d="M1035 665 C 1045 680 1055 694 1062 709" fill="none" stroke="#2b2b2b" stroke-width="5.2" stroke-linecap="round" stroke-linejoin="round"/><path d="M1056 665 C 1062 663 1070 659 1068 655 C 1064 651 1056 658 1055 666 C 1055 674 1062 675 1073 668" fill="none" stroke="#2b2b2b" stroke-width="4.8" stroke-linecap="round" stroke-linejoin="round"/><path d="M1073 641 C 1093 639 1115 637.5 1135 637" fill="none" stroke="#2b2b2b" stroke-width="4.4" stroke-linecap="round" stroke-linejoin="round"/><path d="M1102 629 C 1093 645 1083 662 1076 678" fill="none" stroke="#2b2b2b" stroke-width="5.6" stroke-linecap="round" stroke-linejoin="round"/><path d="M1099 648 C 1090 649 1087 670 1095 673 C 1104 675 1111 656 1101 648" fill="none" stroke="#2b2b2b" stroke-width="5.2" stroke-linecap="round" stroke-linejoin="round"/><path d="M1112 651 C 1110 661 1110 671 1118 671 C 1124 669 1127 659 1131 650 C 1128 660 1128 668 1134 671" fill="none" stroke="#2b2b2b" stroke-width="5.0" stroke-linecap="round" stroke-linejoin="round"/><path d="M1154 649 C 1145 646 1137 660 1139 668 C 1141 674 1149 672 1155 668" fill="none" stroke="#2b2b2b" stroke-width="5.0" stroke-linecap="round" stroke-linejoin="round"/><path d="M1186 618 C 1176 636 1166 657 1158 678" fill="none" stroke="#2b2b2b" stroke-width="6.2" stroke-linecap="round" stroke-linejoin="round"/><path d="M1162 665 C 1167 656 1173 648 1177 650 C 1180 656 1177 665 1179 671" fill="none" stroke="#2b2b2b" stroke-width="5.0" stroke-linecap="round" stroke-linejoin="round"/><path d="M1199 632 C 1197 645 1194 657 1192 667" fill="none" stroke="#2b2b2b" stroke-width="5.0" stroke-linecap="round" stroke-linejoin="round"/><path d="M1203 667 C 1208 657 1213 647 1217 646 C 1219 652 1218 662 1223 667" fill="none" stroke="#2b2b2b" stroke-width="5.0" stroke-linecap="round" stroke-linejoin="round"/><path d="M1250 645 C 1242 638 1230 650 1232 661 C 1234 669 1246 664 1251 650 C 1249 668 1244 686 1238 698 C 1232 708 1236 712 1244 704 C 1252 696 1258 686 1256 679" fill="none" stroke="#2b2b2b" stroke-width="5.0" stroke-linecap="round" stroke-linejoin="round"/><path d="M1263 614 L 1253 634" fill="none" stroke="#2b2b2b" stroke-width="5.0" stroke-linecap="round" stroke-linejoin="round"/><path d="M1260 662 C 1254 667 1250 672 1247 678" fill="none" stroke="#2b2b2b" stroke-width="2.4" stroke-linecap="round" stroke-linejoin="round"/><path d="M1122 692 C 1155 690 1190 688 1223 687" fill="none" stroke="#2b2b2b" stroke-width="3.2" stroke-linecap="round" stroke-linejoin="round"/><path d="M1139 693 C 1132 700 1126 706 1121 712" fill="none" stroke="#2b2b2b" stroke-width="4.0" stroke-linecap="round" stroke-linejoin="round"/><path d="M1138 699 C 1133 699 1132 709 1137 709 C 1142 709 1144 699 1139 698" fill="none" stroke="#2b2b2b" stroke-width="3.2" stroke-linecap="round" stroke-linejoin="round"/><path d="M1152 699 C 1147 699 1146 709 1151 709 C 1156 709 1158 699 1153 698" fill="none" stroke="#2b2b2b" stroke-width="3.2" stroke-linecap="round" stroke-linejoin="round"/><path d="M1166 689 C 1163 696 1161 704 1159 711" fill="none" stroke="#2b2b2b" stroke-width="3.8" stroke-linecap="round" stroke-linejoin="round"/><path d="M1168 702 C 1173 699 1179 697 1181 698 C 1178 702 1175 705 1180 707 C 1184 708 1187 707 1190 706" fill="none" stroke="#2b2b2b" stroke-width="3.4" stroke-linecap="round" stroke-linejoin="round"/><path d="M1197 696 L 1196.5 710" fill="none" stroke="#2b2b2b" stroke-width="3.4" stroke-linecap="round" stroke-linejoin="round"/><path d="M1214 680 C 1209 690 1203 701 1199 711" fill="none" stroke="#2b2b2b" stroke-width="4.0" stroke-linecap="round" stroke-linejoin="round"/><path d="M1199 700 C 1205 699 1211 698 1217 698" fill="none" stroke="#2b2b2b" stroke-width="2.8" stroke-linecap="round" stroke-linejoin="round"/></svg></body></html>
